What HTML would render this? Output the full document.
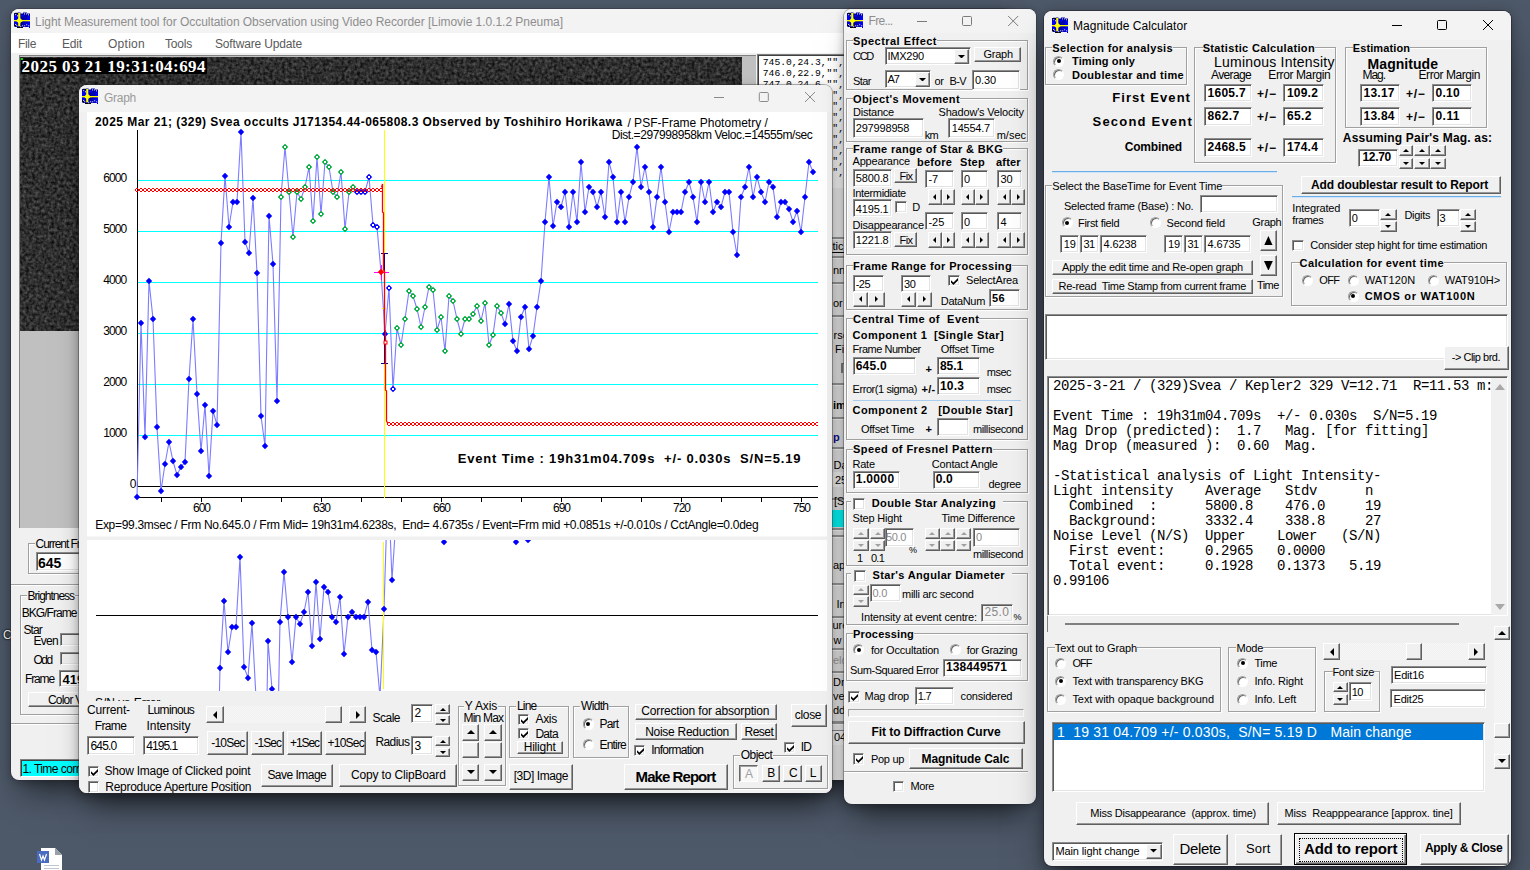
<!DOCTYPE html>
<html lang="en"><head><meta charset="utf-8"><title>Limovie - Magnitude Calculator</title>
<style>
html,body{margin:0;padding:0;}
body{width:1530px;height:870px;overflow:hidden;position:relative;background:#4d5868;font-family:"Liberation Sans",sans-serif;font-size:11px;color:#000;}
.win{position:absolute;overflow:hidden;border-radius:8px;box-shadow:0 0 0 1px rgba(40,40,50,0.35),0 2px 10px rgba(0,0,0,0.28),0 22px 28px -10px rgba(0,0,0,0.5);}
.win>div,.win>span,.win div>span.t{position:absolute;}
.win>div{box-sizing:border-box;}
.t{white-space:pre;position:absolute;}
.btn{background:#f0f0f0;border:1px solid;border-color:#fff #5f5f5f #5f5f5f #fff;box-shadow:inset -1px -1px #989898,inset 1px 1px #f0f0f0;}
.btnp{background:#f8f8f8;border:1px solid;border-color:#696969 #fff #fff #696969;box-shadow:inset 1px 1px #a0a0a0;}
.tb{background:#fff;border:1px solid;border-color:#8c8c8c #fff #fff #8c8c8c;box-shadow:inset 1px 1px #5a5a5a,inset -1px -1px #e3e3e3;}
.sunk{border:1px solid;border-color:#a0a0a0 #fff #fff #a0a0a0;}
.gb{border:1px solid #a0a0a0;box-shadow:1px 1px 0 #fff,inset 1px 1px 0 #fff;}
.chk{background:#fff;border:1px solid;border-color:#8c8c8c #fff #fff #8c8c8c;box-shadow:inset 1px 1px #5a5a5a,inset -1px -1px #e3e3e3;}
.rad{background:#fff;border-radius:50%;border:1px solid;border-color:#a0a0a0 #fff #fff #a0a0a0;box-shadow:inset 1px 1px 0.5px #696969;}
.rad i{position:absolute;left:50%;top:50%;width:4px;height:4px;margin:-2px 0 0 -2px;background:#000;border-radius:50%;}
.sbtrack{background:#f7f7f7;background-image:linear-gradient(45deg,#f0f0f0 25%,transparent 25%,transparent 75%,#f0f0f0 75%),linear-gradient(45deg,#f0f0f0 25%,transparent 25%,transparent 75%,#f0f0f0 75%);background-size:2px 2px;background-position:0 0,1px 1px;}
</style></head>
<body>
<svg width="26" height="24" viewBox="0 0 26 24" style="position:absolute;left:37px;top:848px"><path d="M4 0 H18 L25 7 V24 H4 Z" fill="#fff"/><path d="M18 0 L25 7 H18 Z" fill="#9aa0a8"/><rect x="0" y="3" width="12" height="12" fill="#4a6cc0"/><path d="M2.5 6 L4.5 12 L6 8 L7.5 12 L9.5 6" fill="none" stroke="#fff" stroke-width="1.2"/><rect x="7" y="17" width="15" height="1" fill="#c0c6d0"/><rect x="7" y="20" width="15" height="1" fill="#c0c6d0"/></svg>
<span class="t" style="left:3px;top:628px;font-size:12px;line-height:14px;color:#fff;text-shadow:0 0 2px #000,0 0 2px #000;">C</span>
<div class="win" style="left:11px;top:9px;width:1000px;height:771px;background:#f0f0f0;"><div style="left:0.0px;top:0.0px;width:1000.0px;height:24.0px;background:#f3f3f3;"></div>
<svg width="16" height="16" viewBox="0 0 16 16" style="position:absolute;left:3px;top:3.3000000000000007px"><path d="M0 1 H4 V0.5 H6.5 V1.5 H9 V0.5 H13 V1.5 H16 V16 H15 V15 H9 V16 H3 V15 H1 V14 H0 Z" fill="#0000a8"/><rect x="0" y="4" width="3.6" height="3.6" fill="#0000ff"/><rect x="13.5" y="4" width="2.5" height="11" fill="#0000ff"/><rect x="7" y="3" width="3" height="1.5" fill="#0000ff"/><rect x="0.5" y="9.6" width="3" height="2.4" fill="#0000f0"/><rect x="10.5" y="11" width="2.5" height="1.2" fill="#0000ff"/><rect x="1" y="0.8" width="3" height="1.2" fill="#000030"/><rect x="3" y="15" width="6" height="1" fill="#000"/><rect x="0" y="12.5" width="1.5" height="2" fill="#000"/><g fill="#f4f4ff"><rect x="1.2" y="2.2" width="1" height="1"/><rect x="3" y="3.3" width="1" height="1"/><rect x="10" y="1.4" width="1" height="1"/><rect x="12" y="1.4" width="1" height="1"/><rect x="14" y="2.3" width="1" height="1"/><rect x="1.2" y="12" width="1" height="1"/><rect x="2.3" y="13.2" width="1" height="1"/><rect x="6.2" y="14.2" width="1" height="1"/><rect x="8.2" y="13.3" width="1" height="1"/><rect x="10.2" y="13.3" width="1" height="1"/><rect x="12.2" y="12.3" width="1" height="1"/><rect x="14.2" y="13.3" width="1" height="1"/></g><rect x="0" y="8" width="16" height="1.3" fill="#ffff00"/><rect x="4.2" y="1" width="2.1" height="13.3" fill="#ffff00"/><polygon points="5.25,5.6 9,8.65 5.25,11.6 1.8,8.65" fill="#ffff00"/></svg>
<span class="t" style="left:24.0px;top:5.5px;font-size:12px;line-height:15px;color:#8e8e8e;letter-spacing:-0.042px;">Light Measurement tool for Occultation Observation using Video Recorder [Limovie 1.0.1.2 Pneuma]</span>
<div style="left:0.0px;top:24.0px;width:1000.0px;height:20.0px;background:#fff;"></div>
<span class="t" style="left:7.0px;top:28.0px;font-size:12px;line-height:15px;color:#5a5a5a;letter-spacing:-0.336px;">File</span>
<span class="t" style="left:51.0px;top:28.0px;font-size:12px;line-height:15px;color:#5a5a5a;letter-spacing:-0.172px;">Edit</span>
<span class="t" style="left:97.0px;top:28.0px;font-size:12px;line-height:15px;color:#5a5a5a;letter-spacing:0.273px;">Option</span>
<span class="t" style="left:154.0px;top:28.0px;font-size:12px;line-height:15px;color:#5a5a5a;letter-spacing:-0.203px;">Tools</span>
<span class="t" style="left:204.0px;top:28.0px;font-size:12px;line-height:15px;color:#5a5a5a;letter-spacing:-0.159px;">Software Update</span>
<div style="left:8.0px;top:46.0px;width:737.0px;height:473.0px;background:#c0c0c0;border-top:1px solid #808080;border-left:1px solid #808080;box-sizing:border-box;"></div>
<svg width="722" height="274" style="position:absolute;left:9px;top:48px"><defs><filter id="nz" x="0" y="0" width="100%" height="100%" color-interpolation-filters="sRGB"><feTurbulence type="fractalNoise" baseFrequency="0.32" numOctaves="2" seed="3"/><feColorMatrix type="matrix" values="0.42 0 0 0 -0.025  0.42 0 0 0 -0.025  0.42 0 0 0 -0.025  0 0 0 0 1"/></filter></defs><rect width="722" height="274" fill="#222"/><rect width="722" height="274" filter="url(#nz)"/></svg>
<div style="left:10.0px;top:49.0px;width:186.0px;height:16.3px;background:#000;"></div>
<span class="t" style="left:10.6px;top:48.8px;font-size:17px;line-height:18px;font-weight:bold;color:#fff;font-family:'Liberation Serif', serif;letter-spacing:0.442px;">2025 03 21 19:31:04:694</span>
<div style="left:10.0px;top:49.0px;width:2.0px;height:2.0px;background:#00e000;"></div>
<div style="left:731.0px;top:48.0px;width:13.0px;height:283.0px;background:#c0c0c0;"></div>
<div style="left:746.0px;top:45.0px;width:254.0px;height:134.0px;background:#fff;border-top:1px solid #808080;border-left:1px solid #808080;box-shadow:inset 1px 1px #404040;box-sizing:border-box;"></div>
<span class="t" style="left:751.8px;top:47.5px;font-size:9.67px;line-height:11px;font-family:'Liberation Mono', monospace;">745.0,24.3,&quot;&quot;,</span>
<span class="t" style="left:751.8px;top:58.5px;font-size:9.67px;line-height:11px;font-family:'Liberation Mono', monospace;">746.0,22.9,&quot;&quot;,</span>
<span class="t" style="left:751.8px;top:69.5px;font-size:9.67px;line-height:11px;font-family:'Liberation Mono', monospace;">747.0,24.6,&quot;&quot;,</span>
<span class="t" style="left:751.8px;top:80.5px;font-size:9.67px;line-height:11px;font-family:'Liberation Mono', monospace;">748.0,23.8,&quot;&quot;,</span>
<span class="t" style="left:751.8px;top:91.5px;font-size:9.67px;line-height:11px;font-family:'Liberation Mono', monospace;">749.0,25.1,&quot;&quot;,</span>
<span class="t" style="left:751.8px;top:102.5px;font-size:9.67px;line-height:11px;font-family:'Liberation Mono', monospace;">750.0,22.4,&quot;&quot;,</span>
<span class="t" style="left:751.8px;top:113.5px;font-size:9.67px;line-height:11px;font-family:'Liberation Mono', monospace;">751.0,24.0,&quot;&quot;,</span>
<span class="t" style="left:751.8px;top:124.5px;font-size:9.67px;line-height:11px;font-family:'Liberation Mono', monospace;">752.0,23.3,&quot;&quot;,</span>
<span class="t" style="left:751.8px;top:135.5px;font-size:9.67px;line-height:11px;font-family:'Liberation Mono', monospace;">753.0,25.6,&quot;&quot;,</span>
<span class="t" style="left:751.8px;top:146.5px;font-size:9.67px;line-height:11px;font-family:'Liberation Mono', monospace;">754.0,24.9,&quot;&quot;,</span>
<span class="t" style="left:751.8px;top:157.5px;font-size:9.67px;line-height:11px;font-family:'Liberation Mono', monospace;">755.0,22.7,&quot;&quot;,</span>
<div style="left:821.0px;top:179.0px;width:14.0px;height:536.0px;background:#ececec;"></div>
<div style="left:821.0px;top:715.0px;width:14.0px;height:57.0px;background:#f4f4f4;"></div>
<div style="left:821.0px;top:179.0px;width:14.0px;height:49.0px;background:#f4f4f4;"></div>
<div style="left:821.0px;top:228.0px;width:14.0px;height:2.0px;background:#9c9c9c;"></div>
<div style="left:821.0px;top:230.0px;width:14.0px;height:1.0px;background:#fff;"></div>
<div style="left:821.0px;top:247.0px;width:14.0px;height:2.0px;background:#9c9c9c;"></div>
<div style="left:821.0px;top:249.0px;width:14.0px;height:1.0px;background:#fff;"></div>
<div style="left:821.0px;top:273.0px;width:14.0px;height:2.0px;background:#9c9c9c;"></div>
<div style="left:821.0px;top:275.0px;width:14.0px;height:1.0px;background:#fff;"></div>
<div style="left:821.0px;top:306.0px;width:14.0px;height:2.0px;background:#9c9c9c;"></div>
<div style="left:821.0px;top:308.0px;width:14.0px;height:1.0px;background:#fff;"></div>
<div style="left:821.0px;top:374.0px;width:14.0px;height:2.0px;background:#9c9c9c;"></div>
<div style="left:821.0px;top:376.0px;width:14.0px;height:1.0px;background:#fff;"></div>
<div style="left:821.0px;top:408.0px;width:14.0px;height:2.0px;background:#9c9c9c;"></div>
<div style="left:821.0px;top:410.0px;width:14.0px;height:1.0px;background:#fff;"></div>
<div style="left:821.0px;top:438.0px;width:14.0px;height:2.0px;background:#9c9c9c;"></div>
<div style="left:821.0px;top:440.0px;width:14.0px;height:1.0px;background:#fff;"></div>
<div style="left:821.0px;top:489.0px;width:14.0px;height:2.0px;background:#9c9c9c;"></div>
<div style="left:821.0px;top:491.0px;width:14.0px;height:1.0px;background:#fff;"></div>
<div style="left:821.0px;top:519.0px;width:14.0px;height:2.0px;background:#9c9c9c;"></div>
<div style="left:821.0px;top:521.0px;width:14.0px;height:1.0px;background:#fff;"></div>
<div style="left:821.0px;top:526.0px;width:14.0px;height:2.0px;background:#9c9c9c;"></div>
<div style="left:821.0px;top:528.0px;width:14.0px;height:1.0px;background:#fff;"></div>
<div style="left:821.0px;top:574.0px;width:14.0px;height:2.0px;background:#9c9c9c;"></div>
<div style="left:821.0px;top:576.0px;width:14.0px;height:1.0px;background:#fff;"></div>
<div style="left:821.0px;top:607.0px;width:14.0px;height:2.0px;background:#9c9c9c;"></div>
<div style="left:821.0px;top:609.0px;width:14.0px;height:1.0px;background:#fff;"></div>
<div style="left:821.0px;top:639.0px;width:14.0px;height:2.0px;background:#9c9c9c;"></div>
<div style="left:821.0px;top:641.0px;width:14.0px;height:1.0px;background:#fff;"></div>
<div style="left:821.0px;top:662.0px;width:14.0px;height:2.0px;background:#9c9c9c;"></div>
<div style="left:821.0px;top:664.0px;width:14.0px;height:1.0px;background:#fff;"></div>
<div style="left:821.0px;top:712.0px;width:14.0px;height:2.0px;background:#9c9c9c;"></div>
<div style="left:821.0px;top:714.0px;width:14.0px;height:1.0px;background:#fff;"></div>
<div style="left:821.0px;top:463.4px;width:14.0px;height:14.6px;background:#fafafa;"></div>
<div style="left:821.0px;top:500.6px;width:14.0px;height:17.4px;background:#00ffff;"></div>
<div style="left:821.0px;top:720.6px;width:14.0px;height:15.9px;background:#fcfcfc;border-top:1px solid #909090;box-sizing:border-box;"></div>
<div style="left:829.5px;top:354.0px;width:5.5px;height:10.0px;background:#e0e0e0;border-left:2px solid #808080;border-top:1px solid #808080;box-sizing:border-box;"></div>
<span class="t" style="left:821.5px;top:230.0px;font-size:11px;line-height:14px;color:#000;">tic</span>
<span class="t" style="left:822.0px;top:254.0px;font-size:11px;line-height:14px;color:#000;">nn</span>
<span class="t" style="left:822.0px;top:287.0px;font-size:11px;line-height:14px;color:#000;">or</span>
<span class="t" style="left:822.5px;top:318.7px;font-size:11px;line-height:14px;color:#000;">rse</span>
<span class="t" style="left:824.0px;top:333.0px;font-size:11px;line-height:14px;color:#000;">Fi</span>
<span class="t" style="left:822.0px;top:388.8px;font-size:11px;line-height:14px;font-weight:bold;color:#000;">im</span>
<span class="t" style="left:822.0px;top:421.0px;font-size:11px;line-height:14px;font-weight:bold;color:#101090;">p</span>
<span class="t" style="left:822.5px;top:448.8px;font-size:11px;line-height:14px;color:#000;">Da</span>
<span class="t" style="left:824.0px;top:464.0px;font-size:11px;line-height:14px;color:#000;">25</span>
<span class="t" style="left:823.0px;top:484.7px;font-size:11px;line-height:14px;color:#000;">[S</span>
<span class="t" style="left:822.0px;top:548.5px;font-size:11px;line-height:14px;color:#000;">ap</span>
<span class="t" style="left:825.5px;top:588.0px;font-size:11px;line-height:14px;color:#000;">In</span>
<span class="t" style="left:821.5px;top:608.5px;font-size:11px;line-height:14px;color:#000;">ure</span>
<span class="t" style="left:822.5px;top:623.5px;font-size:11px;line-height:14px;color:#000;">w</span>
<span class="t" style="left:822.0px;top:643.7px;font-size:11px;line-height:14px;color:#a0a0a0;">eld</span>
<span class="t" style="left:822.0px;top:666.0px;font-size:11px;line-height:14px;color:#000;">Dro</span>
<span class="t" style="left:822.0px;top:680.0px;font-size:11px;line-height:14px;color:#000;">ver</span>
<span class="t" style="left:822.0px;top:693.6px;font-size:11px;line-height:14px;color:#000;">dd</span>
<span class="t" style="left:823.0px;top:721.0px;font-size:11px;line-height:14px;color:#000;">04</span>
<div style="left:821.0px;top:242.5px;width:14.0px;height:1.0px;background:#000;"></div>
<div class="gb" style="left:16.5px;top:534.0px;width:272.5px;height:31.0px;"></div>
<span class="t" style="left:23.5px;top:527.5px;font-size:12px;line-height:15px;letter-spacing:-1.041px;background:#f0f0f0;padding:0 1px;">Current Frame</span>
<div class="tb" style="left:24.5px;top:542.5px;width:164.5px;height:19.5px;"></div>
<span class="t" style="left:27.0px;top:544.5px;font-size:14px;line-height:18px;font-weight:bold;letter-spacing:0.014px;">645</span>
<div style="left:0.0px;top:575.0px;width:1000.0px;height:2.0px;border-top:1px solid #a0a0a0;border-bottom:1px solid #fff;box-sizing:border-box;"></div>
<div class="gb" style="left:8.5px;top:586.0px;width:280.5px;height:120.0px;"></div>
<span class="t" style="left:15.6px;top:579.5px;font-size:12px;line-height:15px;letter-spacing:-1.030px;background:#f0f0f0;padding:0 1px;">Brightness</span>
<span class="t" style="left:10.7px;top:597.2px;font-size:12px;line-height:15px;letter-spacing:-0.951px;">BKG/Frame</span>
<span class="t" style="left:12.4px;top:613.5px;font-size:12px;line-height:15px;letter-spacing:-0.854px;">Star</span>
<span class="t" style="left:22.4px;top:625.2px;font-size:12px;line-height:15px;letter-spacing:-0.690px;">Even</span>
<div class="tb" style="left:49.0px;top:623.7px;width:140.0px;height:13.8px;background:#f0f0f0;"></div>
<span class="t" style="left:22.4px;top:644.1px;font-size:12px;line-height:15px;letter-spacing:-1.462px;">Odd</span>
<div class="tb" style="left:49.0px;top:642.7px;width:140.0px;height:13.8px;background:#f0f0f0;"></div>
<span class="t" style="left:14.0px;top:662.5px;font-size:12px;line-height:15px;letter-spacing:-1.134px;">Frame</span>
<div class="tb" style="left:48.3px;top:660.6px;width:140.7px;height:17.4px;"></div>
<span class="t" style="left:51.5px;top:662.5px;font-size:13px;line-height:16px;font-weight:bold;">4195.1</span>
<div class="btn" style="left:16.6px;top:683.0px;width:172.4px;height:15.0px;"></div>
<span class="t" style="left:37.0px;top:684.0px;font-size:12px;line-height:15px;letter-spacing:-0.809px;">Color Vi</span>
<div style="left:0.0px;top:714.0px;width:1000.0px;height:2.0px;border-top:1px solid #a0a0a0;border-bottom:1px solid #fff;box-sizing:border-box;"></div>
<div style="left:8.5px;top:749.5px;width:280.5px;height:18.5px;background:#00ffff;border:1px solid;border-color:#808080 #fff #fff #808080;box-shadow:inset 1px 1px #404040;box-sizing:border-box;"></div>
<span class="t" style="left:11.4px;top:752.5px;font-size:12px;line-height:15px;letter-spacing:-0.543px;">1. Time correction</span></div>
<div class="win" style="left:79px;top:85px;width:753px;height:708px;background:#f0f0f0;"><div style="left:0.0px;top:0.0px;width:753.0px;height:27.0px;background:#f3f3f3;"></div>
<svg width="16" height="16" viewBox="0 0 16 16" style="position:absolute;left:3px;top:3.299999999999997px"><path d="M0 1 H4 V0.5 H6.5 V1.5 H9 V0.5 H13 V1.5 H16 V16 H15 V15 H9 V16 H3 V15 H1 V14 H0 Z" fill="#0000a8"/><rect x="0" y="4" width="3.6" height="3.6" fill="#0000ff"/><rect x="13.5" y="4" width="2.5" height="11" fill="#0000ff"/><rect x="7" y="3" width="3" height="1.5" fill="#0000ff"/><rect x="0.5" y="9.6" width="3" height="2.4" fill="#0000f0"/><rect x="10.5" y="11" width="2.5" height="1.2" fill="#0000ff"/><rect x="1" y="0.8" width="3" height="1.2" fill="#000030"/><rect x="3" y="15" width="6" height="1" fill="#000"/><rect x="0" y="12.5" width="1.5" height="2" fill="#000"/><g fill="#f4f4ff"><rect x="1.2" y="2.2" width="1" height="1"/><rect x="3" y="3.3" width="1" height="1"/><rect x="10" y="1.4" width="1" height="1"/><rect x="12" y="1.4" width="1" height="1"/><rect x="14" y="2.3" width="1" height="1"/><rect x="1.2" y="12" width="1" height="1"/><rect x="2.3" y="13.2" width="1" height="1"/><rect x="6.2" y="14.2" width="1" height="1"/><rect x="8.2" y="13.3" width="1" height="1"/><rect x="10.2" y="13.3" width="1" height="1"/><rect x="12.2" y="12.3" width="1" height="1"/><rect x="14.2" y="13.3" width="1" height="1"/></g><rect x="0" y="8" width="16" height="1.3" fill="#ffff00"/><rect x="4.2" y="1" width="2.1" height="13.3" fill="#ffff00"/><polygon points="5.25,5.6 9,8.65 5.25,11.6 1.8,8.65" fill="#ffff00"/></svg>
<span class="t" style="left:25.0px;top:5.5px;font-size:12px;line-height:15px;color:#9a9a9a;letter-spacing:-0.272px;">Graph</span>
<svg width="753" height="40" style="position:absolute;left:0;top:0" fill="none" stroke="#8a8a8a" stroke-width="1"><line x1="635" y1="12.5" x2="645" y2="12.5"/><rect x="680.3" y="7.5" width="9" height="9" rx="1"/><path d="M726 7 L736 17 M736 7 L726 17"/></svg>
<svg width="740" height="579" viewBox="87 112 740 579" style="position:absolute;left:8px;top:27px">
<rect x="87" y="112" width="740" height="579" fill="#fff"/>
<rect x="87" y="536.5" width="740" height="3.5" fill="#f0f0f0"/>
<g shape-rendering="crispEdges">
<rect x="138" y="180" width="680" height="1" fill="#00ffff"/>
<rect x="138" y="231" width="680" height="1" fill="#00ffff"/>
<rect x="138" y="282" width="680" height="1" fill="#00ffff"/>
<rect x="138" y="333" width="680" height="1" fill="#00ffff"/>
<rect x="138" y="384" width="680" height="1" fill="#00ffff"/>
<rect x="138" y="435" width="680" height="1" fill="#00ffff"/>
<rect x="137" y="130" width="1.4" height="357" fill="#000"/>
<rect x="137" y="486" width="681" height="1" fill="#000"/>
<rect x="137" y="497" width="681" height="1" fill="#000"/>
<rect x="161" y="497" width="1" height="5" fill="#000"/>
<rect x="201" y="497" width="1" height="5" fill="#000"/>
<rect x="241" y="497" width="1" height="5" fill="#000"/>
<rect x="281" y="497" width="1" height="5" fill="#000"/>
<rect x="321" y="497" width="1" height="5" fill="#000"/>
<rect x="361" y="497" width="1" height="5" fill="#000"/>
<rect x="401" y="497" width="1" height="5" fill="#000"/>
<rect x="441" y="497" width="1" height="5" fill="#000"/>
<rect x="481" y="497" width="1" height="5" fill="#000"/>
<rect x="521" y="497" width="1" height="5" fill="#000"/>
<rect x="561" y="497" width="1" height="5" fill="#000"/>
<rect x="601" y="497" width="1" height="5" fill="#000"/>
<rect x="641" y="497" width="1" height="5" fill="#000"/>
<rect x="681" y="497" width="1" height="5" fill="#000"/>
<rect x="721" y="497" width="1" height="5" fill="#000"/>
<rect x="761" y="497" width="1" height="5" fill="#000"/>
<rect x="801" y="497" width="1" height="5" fill="#000"/>
</g>
<polyline points="137,497 141,323 145,437 149,281 153,319 157,427 161,491 165,464 169,442 173,461 177,475 181,467 185,462 189,379 193,319 197,394 201,451 205,405 209,476 213,411 217,425 221,243 225,176 229,227 233,202 237,202 241,132 245,242 249,253 253,198 257,273 261,416 265,446 269,216 273,264 277,401 281,197 285,147 289,192 293,237 297,192 301,199 305,187 309,167 313,221 317,157 321,214 325,162 329,167 333,192 337,197 341,172 345,229 349,192 353,187 357,192 361,192 365,192 369,177 373,225 377,227 381,272 385,334 389,288 393,389 397,328 401,345 405,319 409,291 413,296 417,309 421,327 425,307 429,287 433,290 437,330 441,317 445,351 449,296 453,301 457,319 461,334 465,319 469,319 473,314 477,306 481,321 485,303 489,345 493,335 497,306 501,313 505,324 509,304 513,341 517,351 521,317 525,307 529,349 533,336 537,307 541,281 545,222 549,177 553,226 557,202 561,207 565,192 569,227 573,192 577,222 581,162 585,212 589,187 593,192 597,207 601,192 605,217 609,162 613,177 617,222 621,192 625,222 629,197 633,182 637,147 641,187 645,167 649,192 653,227 657,197 661,167 665,202 669,232 673,212 677,212 681,212 685,192 689,182 693,197 697,222 701,182 705,202 709,182 713,212 717,202 721,207 725,192 729,192 733,232 737,255 741,197 745,187 749,167 753,197 757,177 761,192 765,202 769,182 773,187 777,217 781,202 785,202 789,209 793,222 797,211 801,232 805,197 809,162 813,172" fill="none" stroke="#7c7cff" stroke-width="1.1"/>
<rect x="384" y="130" width="1" height="368" fill="#ffff00" shape-rendering="crispEdges"/>
<g shape-rendering="crispEdges"><rect x="384" y="254" width="1" height="110" fill="#000080"/><rect x="381" y="253" width="7" height="1" fill="#000080"/><rect x="381" y="363" width="7" height="1" fill="#000080"/><rect x="374" y="272" width="15" height="1" fill="#ff00ff"/><rect x="381" y="265" width="1" height="15" fill="#ff00ff"/><rect x="382" y="308" width="4" height="1" fill="#ffe000"/></g>
<polygon points="133.8,497 137,493.8 140.2,497 137,500.2" fill="#0000ff"/>
<polygon points="137.8,323 141,319.8 144.2,323 141,326.2" fill="#0000ff"/>
<polygon points="141.8,437 145,433.8 148.2,437 145,440.2" fill="#0000ff"/>
<polygon points="145.8,281 149,277.8 152.2,281 149,284.2" fill="#0000ff"/>
<polygon points="149.8,319 153,315.8 156.2,319 153,322.2" fill="#0000ff"/>
<polygon points="153.8,427 157,423.8 160.2,427 157,430.2" fill="#0000ff"/>
<polygon points="157.8,491 161,487.8 164.2,491 161,494.2" fill="#0000ff"/>
<polygon points="161.8,464 165,460.8 168.2,464 165,467.2" fill="#0000ff"/>
<polygon points="165.8,442 169,438.8 172.2,442 169,445.2" fill="#0000ff"/>
<polygon points="169.8,461 173,457.8 176.2,461 173,464.2" fill="#0000ff"/>
<polygon points="173.8,475 177,471.8 180.2,475 177,478.2" fill="#0000ff"/>
<polygon points="177.8,467 181,463.8 184.2,467 181,470.2" fill="#0000ff"/>
<polygon points="181.8,462 185,458.8 188.2,462 185,465.2" fill="#0000ff"/>
<polygon points="185.8,379 189,375.8 192.2,379 189,382.2" fill="#0000ff"/>
<polygon points="189.8,319 193,315.8 196.2,319 193,322.2" fill="#0000ff"/>
<polygon points="193.8,394 197,390.8 200.2,394 197,397.2" fill="#0000ff"/>
<polygon points="197.8,451 201,447.8 204.2,451 201,454.2" fill="#0000ff"/>
<polygon points="201.8,405 205,401.8 208.2,405 205,408.2" fill="#0000ff"/>
<polygon points="205.8,476 209,472.8 212.2,476 209,479.2" fill="#0000ff"/>
<polygon points="209.8,411 213,407.8 216.2,411 213,414.2" fill="#0000ff"/>
<polygon points="213.8,425 217,421.8 220.2,425 217,428.2" fill="#0000ff"/>
<polygon points="217.8,243 221,239.8 224.2,243 221,246.2" fill="#0000ff"/>
<polygon points="221.8,176 225,172.8 228.2,176 225,179.2" fill="#0000ff"/>
<polygon points="225.8,227 229,223.8 232.2,227 229,230.2" fill="#0000ff"/>
<polygon points="229.8,202 233,198.8 236.2,202 233,205.2" fill="#0000ff"/>
<polygon points="233.8,202 237,198.8 240.2,202 237,205.2" fill="#0000ff"/>
<polygon points="237.8,132 241,128.8 244.2,132 241,135.2" fill="#0000ff"/>
<polygon points="241.8,242 245,238.8 248.2,242 245,245.2" fill="#0000ff"/>
<polygon points="245.8,253 249,249.8 252.2,253 249,256.2" fill="#0000ff"/>
<polygon points="249.8,198 253,194.8 256.2,198 253,201.2" fill="#0000ff"/>
<polygon points="253.8,273 257,269.8 260.2,273 257,276.2" fill="#0000ff"/>
<polygon points="257.8,416 261,412.8 264.2,416 261,419.2" fill="#0000ff"/>
<polygon points="261.8,446 265,442.8 268.2,446 265,449.2" fill="#0000ff"/>
<polygon points="265.8,216 269,212.8 272.2,216 269,219.2" fill="#0000ff"/>
<polygon points="269.8,264 273,260.8 276.2,264 273,267.2" fill="#0000ff"/>
<polygon points="273.8,401 277,397.8 280.2,401 277,404.2" fill="#0000ff"/>
<polygon points="277.8,197 281,193.8 284.2,197 281,200.2" fill="#00aa3c"/><rect x="280" y="196" width="2" height="2" fill="#fff"/>
<polygon points="281.8,147 285,143.8 288.2,147 285,150.2" fill="#00aa3c"/><rect x="284" y="146" width="2" height="2" fill="#fff"/>
<polygon points="285.8,192 289,188.8 292.2,192 289,195.2" fill="#00aa3c"/><rect x="288" y="191" width="2" height="2" fill="#fff"/>
<polygon points="289.8,237 293,233.8 296.2,237 293,240.2" fill="#00aa3c"/><rect x="292" y="236" width="2" height="2" fill="#fff"/>
<polygon points="293.8,192 297,188.8 300.2,192 297,195.2" fill="#00aa3c"/><rect x="296" y="191" width="2" height="2" fill="#fff"/>
<polygon points="297.8,199 301,195.8 304.2,199 301,202.2" fill="#00aa3c"/><rect x="300" y="198" width="2" height="2" fill="#fff"/>
<polygon points="301.8,187 305,183.8 308.2,187 305,190.2" fill="#00aa3c"/><rect x="304" y="186" width="2" height="2" fill="#fff"/>
<polygon points="305.8,167 309,163.8 312.2,167 309,170.2" fill="#00aa3c"/><rect x="308" y="166" width="2" height="2" fill="#fff"/>
<polygon points="309.8,221 313,217.8 316.2,221 313,224.2" fill="#00aa3c"/><rect x="312" y="220" width="2" height="2" fill="#fff"/>
<polygon points="313.8,157 317,153.8 320.2,157 317,160.2" fill="#00aa3c"/><rect x="316" y="156" width="2" height="2" fill="#fff"/>
<polygon points="317.8,214 321,210.8 324.2,214 321,217.2" fill="#00aa3c"/><rect x="320" y="213" width="2" height="2" fill="#fff"/>
<polygon points="321.8,162 325,158.8 328.2,162 325,165.2" fill="#00aa3c"/><rect x="324" y="161" width="2" height="2" fill="#fff"/>
<polygon points="325.8,167 329,163.8 332.2,167 329,170.2" fill="#00aa3c"/><rect x="328" y="166" width="2" height="2" fill="#fff"/>
<polygon points="329.8,192 333,188.8 336.2,192 333,195.2" fill="#00aa3c"/><rect x="332" y="191" width="2" height="2" fill="#fff"/>
<polygon points="333.8,197 337,193.8 340.2,197 337,200.2" fill="#00aa3c"/><rect x="336" y="196" width="2" height="2" fill="#fff"/>
<polygon points="337.8,172 341,168.8 344.2,172 341,175.2" fill="#00aa3c"/><rect x="340" y="171" width="2" height="2" fill="#fff"/>
<polygon points="341.8,229 345,225.8 348.2,229 345,232.2" fill="#00aa3c"/><rect x="344" y="228" width="2" height="2" fill="#fff"/>
<polygon points="345.8,192 349,188.8 352.2,192 349,195.2" fill="#00aa3c"/><rect x="348" y="191" width="2" height="2" fill="#fff"/>
<polygon points="349.8,187 353,183.8 356.2,187 353,190.2" fill="#00aa3c"/><rect x="352" y="186" width="2" height="2" fill="#fff"/>
<polygon points="353.8,192 357,188.8 360.2,192 357,195.2" fill="#0000ff"/><rect x="356" y="191" width="2" height="2" fill="#fff"/>
<polygon points="357.8,192 361,188.8 364.2,192 361,195.2" fill="#0000ff"/><rect x="360" y="191" width="2" height="2" fill="#fff"/>
<polygon points="361.8,192 365,188.8 368.2,192 365,195.2" fill="#0000ff"/><rect x="364" y="191" width="2" height="2" fill="#fff"/>
<polygon points="365.8,177 369,173.8 372.2,177 369,180.2" fill="#0000ff"/><rect x="368" y="176" width="2" height="2" fill="#fff"/>
<polygon points="369.8,225 373,221.8 376.2,225 373,228.2" fill="#0000ff"/><rect x="372" y="224" width="2" height="2" fill="#fff"/>
<polygon points="373.8,227 377,223.8 380.2,227 377,230.2" fill="#0000ff"/><rect x="376" y="226" width="2" height="2" fill="#fff"/>
<polygon points="377.8,272 381,268.8 384.2,272 381,275.2" fill="#ff0000"/>
<polygon points="381.8,334 385,330.8 388.2,334 385,337.2" fill="#0000ff"/>
<polygon points="385.8,288 389,284.8 392.2,288 389,291.2" fill="#0000ff"/><rect x="388" y="287" width="2" height="2" fill="#fff"/>
<polygon points="389.8,389 393,385.8 396.2,389 393,392.2" fill="#0000ff"/><rect x="392" y="388" width="2" height="2" fill="#fff"/>
<polygon points="393.8,328 397,324.8 400.2,328 397,331.2" fill="#00aa3c"/><rect x="396" y="327" width="2" height="2" fill="#fff"/>
<polygon points="397.8,345 401,341.8 404.2,345 401,348.2" fill="#00aa3c"/><rect x="400" y="344" width="2" height="2" fill="#fff"/>
<polygon points="401.8,319 405,315.8 408.2,319 405,322.2" fill="#00aa3c"/><rect x="404" y="318" width="2" height="2" fill="#fff"/>
<polygon points="405.8,291 409,287.8 412.2,291 409,294.2" fill="#00aa3c"/><rect x="408" y="290" width="2" height="2" fill="#fff"/>
<polygon points="409.8,296 413,292.8 416.2,296 413,299.2" fill="#00aa3c"/><rect x="412" y="295" width="2" height="2" fill="#fff"/>
<polygon points="413.8,309 417,305.8 420.2,309 417,312.2" fill="#00aa3c"/><rect x="416" y="308" width="2" height="2" fill="#fff"/>
<polygon points="417.8,327 421,323.8 424.2,327 421,330.2" fill="#00aa3c"/><rect x="420" y="326" width="2" height="2" fill="#fff"/>
<polygon points="421.8,307 425,303.8 428.2,307 425,310.2" fill="#00aa3c"/><rect x="424" y="306" width="2" height="2" fill="#fff"/>
<polygon points="425.8,287 429,283.8 432.2,287 429,290.2" fill="#00aa3c"/><rect x="428" y="286" width="2" height="2" fill="#fff"/>
<polygon points="429.8,290 433,286.8 436.2,290 433,293.2" fill="#00aa3c"/><rect x="432" y="289" width="2" height="2" fill="#fff"/>
<polygon points="433.8,330 437,326.8 440.2,330 437,333.2" fill="#00aa3c"/><rect x="436" y="329" width="2" height="2" fill="#fff"/>
<polygon points="437.8,317 441,313.8 444.2,317 441,320.2" fill="#00aa3c"/><rect x="440" y="316" width="2" height="2" fill="#fff"/>
<polygon points="441.8,351 445,347.8 448.2,351 445,354.2" fill="#00aa3c"/><rect x="444" y="350" width="2" height="2" fill="#fff"/>
<polygon points="445.8,296 449,292.8 452.2,296 449,299.2" fill="#00aa3c"/><rect x="448" y="295" width="2" height="2" fill="#fff"/>
<polygon points="449.8,301 453,297.8 456.2,301 453,304.2" fill="#00aa3c"/><rect x="452" y="300" width="2" height="2" fill="#fff"/>
<polygon points="453.8,319 457,315.8 460.2,319 457,322.2" fill="#00aa3c"/><rect x="456" y="318" width="2" height="2" fill="#fff"/>
<polygon points="457.8,334 461,330.8 464.2,334 461,337.2" fill="#00aa3c"/><rect x="460" y="333" width="2" height="2" fill="#fff"/>
<polygon points="461.8,319 465,315.8 468.2,319 465,322.2" fill="#00aa3c"/><rect x="464" y="318" width="2" height="2" fill="#fff"/>
<polygon points="465.8,319 469,315.8 472.2,319 469,322.2" fill="#00aa3c"/><rect x="468" y="318" width="2" height="2" fill="#fff"/>
<polygon points="469.8,314 473,310.8 476.2,314 473,317.2" fill="#00aa3c"/><rect x="472" y="313" width="2" height="2" fill="#fff"/>
<polygon points="473.8,306 477,302.8 480.2,306 477,309.2" fill="#00aa3c"/><rect x="476" y="305" width="2" height="2" fill="#fff"/>
<polygon points="477.8,321 481,317.8 484.2,321 481,324.2" fill="#00aa3c"/><rect x="480" y="320" width="2" height="2" fill="#fff"/>
<polygon points="481.8,303 485,299.8 488.2,303 485,306.2" fill="#00aa3c"/><rect x="484" y="302" width="2" height="2" fill="#fff"/>
<polygon points="485.8,345 489,341.8 492.2,345 489,348.2" fill="#00aa3c"/><rect x="488" y="344" width="2" height="2" fill="#fff"/>
<polygon points="489.8,335 493,331.8 496.2,335 493,338.2" fill="#00aa3c"/><rect x="492" y="334" width="2" height="2" fill="#fff"/>
<polygon points="493.8,306 497,302.8 500.2,306 497,309.2" fill="#00aa3c"/><rect x="496" y="305" width="2" height="2" fill="#fff"/>
<polygon points="497.8,313 501,309.8 504.2,313 501,316.2" fill="#00aa3c"/><rect x="500" y="312" width="2" height="2" fill="#fff"/>
<polygon points="501.8,324 505,320.8 508.2,324 505,327.2" fill="#0000ff"/>
<polygon points="505.8,304 509,300.8 512.2,304 509,307.2" fill="#0000ff"/>
<polygon points="509.8,341 513,337.8 516.2,341 513,344.2" fill="#0000ff"/>
<polygon points="513.8,351 517,347.8 520.2,351 517,354.2" fill="#0000ff"/>
<polygon points="517.8,317 521,313.8 524.2,317 521,320.2" fill="#0000ff"/>
<polygon points="521.8,307 525,303.8 528.2,307 525,310.2" fill="#0000ff"/>
<polygon points="525.8,349 529,345.8 532.2,349 529,352.2" fill="#0000ff"/>
<polygon points="529.8,336 533,332.8 536.2,336 533,339.2" fill="#0000ff"/>
<polygon points="533.8,307 537,303.8 540.2,307 537,310.2" fill="#0000ff"/>
<polygon points="537.8,281 541,277.8 544.2,281 541,284.2" fill="#0000ff"/>
<polygon points="541.8,222 545,218.8 548.2,222 545,225.2" fill="#0000ff"/>
<polygon points="545.8,177 549,173.8 552.2,177 549,180.2" fill="#0000ff"/>
<polygon points="549.8,226 553,222.8 556.2,226 553,229.2" fill="#0000ff"/>
<polygon points="553.8,202 557,198.8 560.2,202 557,205.2" fill="#0000ff"/>
<polygon points="557.8,207 561,203.8 564.2,207 561,210.2" fill="#0000ff"/>
<polygon points="561.8,192 565,188.8 568.2,192 565,195.2" fill="#0000ff"/>
<polygon points="565.8,227 569,223.8 572.2,227 569,230.2" fill="#0000ff"/>
<polygon points="569.8,192 573,188.8 576.2,192 573,195.2" fill="#0000ff"/>
<polygon points="573.8,222 577,218.8 580.2,222 577,225.2" fill="#0000ff"/>
<polygon points="577.8,162 581,158.8 584.2,162 581,165.2" fill="#0000ff"/>
<polygon points="581.8,212 585,208.8 588.2,212 585,215.2" fill="#0000ff"/>
<polygon points="585.8,187 589,183.8 592.2,187 589,190.2" fill="#0000ff"/>
<polygon points="589.8,192 593,188.8 596.2,192 593,195.2" fill="#0000ff"/>
<polygon points="593.8,207 597,203.8 600.2,207 597,210.2" fill="#0000ff"/>
<polygon points="597.8,192 601,188.8 604.2,192 601,195.2" fill="#0000ff"/>
<polygon points="601.8,217 605,213.8 608.2,217 605,220.2" fill="#0000ff"/>
<polygon points="605.8,162 609,158.8 612.2,162 609,165.2" fill="#0000ff"/>
<polygon points="609.8,177 613,173.8 616.2,177 613,180.2" fill="#0000ff"/>
<polygon points="613.8,222 617,218.8 620.2,222 617,225.2" fill="#0000ff"/>
<polygon points="617.8,192 621,188.8 624.2,192 621,195.2" fill="#0000ff"/>
<polygon points="621.8,222 625,218.8 628.2,222 625,225.2" fill="#0000ff"/>
<polygon points="625.8,197 629,193.8 632.2,197 629,200.2" fill="#0000ff"/>
<polygon points="629.8,182 633,178.8 636.2,182 633,185.2" fill="#0000ff"/>
<polygon points="633.8,147 637,143.8 640.2,147 637,150.2" fill="#0000ff"/>
<polygon points="637.8,187 641,183.8 644.2,187 641,190.2" fill="#0000ff"/>
<polygon points="641.8,167 645,163.8 648.2,167 645,170.2" fill="#0000ff"/>
<polygon points="645.8,192 649,188.8 652.2,192 649,195.2" fill="#0000ff"/>
<polygon points="649.8,227 653,223.8 656.2,227 653,230.2" fill="#0000ff"/>
<polygon points="653.8,197 657,193.8 660.2,197 657,200.2" fill="#0000ff"/>
<polygon points="657.8,167 661,163.8 664.2,167 661,170.2" fill="#0000ff"/>
<polygon points="661.8,202 665,198.8 668.2,202 665,205.2" fill="#0000ff"/>
<polygon points="665.8,232 669,228.8 672.2,232 669,235.2" fill="#0000ff"/>
<polygon points="669.8,212 673,208.8 676.2,212 673,215.2" fill="#0000ff"/>
<polygon points="673.8,212 677,208.8 680.2,212 677,215.2" fill="#0000ff"/>
<polygon points="677.8,212 681,208.8 684.2,212 681,215.2" fill="#0000ff"/>
<polygon points="681.8,192 685,188.8 688.2,192 685,195.2" fill="#0000ff"/>
<polygon points="685.8,182 689,178.8 692.2,182 689,185.2" fill="#0000ff"/>
<polygon points="689.8,197 693,193.8 696.2,197 693,200.2" fill="#0000ff"/>
<polygon points="693.8,222 697,218.8 700.2,222 697,225.2" fill="#0000ff"/>
<polygon points="697.8,182 701,178.8 704.2,182 701,185.2" fill="#0000ff"/>
<polygon points="701.8,202 705,198.8 708.2,202 705,205.2" fill="#0000ff"/>
<polygon points="705.8,182 709,178.8 712.2,182 709,185.2" fill="#0000ff"/>
<polygon points="709.8,212 713,208.8 716.2,212 713,215.2" fill="#0000ff"/>
<polygon points="713.8,202 717,198.8 720.2,202 717,205.2" fill="#0000ff"/>
<polygon points="717.8,207 721,203.8 724.2,207 721,210.2" fill="#0000ff"/>
<polygon points="721.8,192 725,188.8 728.2,192 725,195.2" fill="#0000ff"/>
<polygon points="725.8,192 729,188.8 732.2,192 729,195.2" fill="#0000ff"/>
<polygon points="729.8,232 733,228.8 736.2,232 733,235.2" fill="#0000ff"/>
<polygon points="733.8,255 737,251.8 740.2,255 737,258.2" fill="#0000ff"/>
<polygon points="737.8,197 741,193.8 744.2,197 741,200.2" fill="#0000ff"/>
<polygon points="741.8,187 745,183.8 748.2,187 745,190.2" fill="#0000ff"/>
<polygon points="745.8,167 749,163.8 752.2,167 749,170.2" fill="#0000ff"/>
<polygon points="749.8,197 753,193.8 756.2,197 753,200.2" fill="#0000ff"/>
<polygon points="753.8,177 757,173.8 760.2,177 757,180.2" fill="#0000ff"/>
<polygon points="757.8,192 761,188.8 764.2,192 761,195.2" fill="#0000ff"/>
<polygon points="761.8,202 765,198.8 768.2,202 765,205.2" fill="#0000ff"/>
<polygon points="765.8,182 769,178.8 772.2,182 769,185.2" fill="#0000ff"/>
<polygon points="769.8,187 773,183.8 776.2,187 773,190.2" fill="#0000ff"/>
<polygon points="773.8,217 777,213.8 780.2,217 777,220.2" fill="#0000ff"/>
<polygon points="777.8,202 781,198.8 784.2,202 781,205.2" fill="#0000ff"/>
<polygon points="781.8,202 785,198.8 788.2,202 785,205.2" fill="#0000ff"/>
<polygon points="785.8,209 789,205.8 792.2,209 789,212.2" fill="#0000ff"/>
<polygon points="789.8,222 793,218.8 796.2,222 793,225.2" fill="#0000ff"/>
<polygon points="793.8,211 797,207.8 800.2,211 797,214.2" fill="#0000ff"/>
<polygon points="797.8,232 801,228.8 804.2,232 801,235.2" fill="#0000ff"/>
<polygon points="801.8,197 805,193.8 808.2,197 805,200.2" fill="#0000ff"/>
<polygon points="805.8,162 809,158.8 812.2,162 809,165.2" fill="#0000ff"/>
<polygon points="809.8,172 813,168.8 816.2,172 813,175.2" fill="#0000ff"/>
<clipPath id="uc"><rect x="130" y="120" width="688" height="380"/></clipPath>
<path d="M136 188h2v1h-2z M135 189h1v2h-1z M138 189h1v2h-1z M136 191h2v1h-2z M140 188h2v1h-2z M139 189h1v2h-1z M142 189h1v2h-1z M140 191h2v1h-2z M144 188h2v1h-2z M143 189h1v2h-1z M146 189h1v2h-1z M144 191h2v1h-2z M148 188h2v1h-2z M147 189h1v2h-1z M150 189h1v2h-1z M148 191h2v1h-2z M152 188h2v1h-2z M151 189h1v2h-1z M154 189h1v2h-1z M152 191h2v1h-2z M156 188h2v1h-2z M155 189h1v2h-1z M158 189h1v2h-1z M156 191h2v1h-2z M160 188h2v1h-2z M159 189h1v2h-1z M162 189h1v2h-1z M160 191h2v1h-2z M164 188h2v1h-2z M163 189h1v2h-1z M166 189h1v2h-1z M164 191h2v1h-2z M168 188h2v1h-2z M167 189h1v2h-1z M170 189h1v2h-1z M168 191h2v1h-2z M172 188h2v1h-2z M171 189h1v2h-1z M174 189h1v2h-1z M172 191h2v1h-2z M176 188h2v1h-2z M175 189h1v2h-1z M178 189h1v2h-1z M176 191h2v1h-2z M180 188h2v1h-2z M179 189h1v2h-1z M182 189h1v2h-1z M180 191h2v1h-2z M184 188h2v1h-2z M183 189h1v2h-1z M186 189h1v2h-1z M184 191h2v1h-2z M188 188h2v1h-2z M187 189h1v2h-1z M190 189h1v2h-1z M188 191h2v1h-2z M192 188h2v1h-2z M191 189h1v2h-1z M194 189h1v2h-1z M192 191h2v1h-2z M196 188h2v1h-2z M195 189h1v2h-1z M198 189h1v2h-1z M196 191h2v1h-2z M200 188h2v1h-2z M199 189h1v2h-1z M202 189h1v2h-1z M200 191h2v1h-2z M204 188h2v1h-2z M203 189h1v2h-1z M206 189h1v2h-1z M204 191h2v1h-2z M208 188h2v1h-2z M207 189h1v2h-1z M210 189h1v2h-1z M208 191h2v1h-2z M212 188h2v1h-2z M211 189h1v2h-1z M214 189h1v2h-1z M212 191h2v1h-2z M216 188h2v1h-2z M215 189h1v2h-1z M218 189h1v2h-1z M216 191h2v1h-2z M220 188h2v1h-2z M219 189h1v2h-1z M222 189h1v2h-1z M220 191h2v1h-2z M224 188h2v1h-2z M223 189h1v2h-1z M226 189h1v2h-1z M224 191h2v1h-2z M228 188h2v1h-2z M227 189h1v2h-1z M230 189h1v2h-1z M228 191h2v1h-2z M232 188h2v1h-2z M231 189h1v2h-1z M234 189h1v2h-1z M232 191h2v1h-2z M236 188h2v1h-2z M235 189h1v2h-1z M238 189h1v2h-1z M236 191h2v1h-2z M240 188h2v1h-2z M239 189h1v2h-1z M242 189h1v2h-1z M240 191h2v1h-2z M244 188h2v1h-2z M243 189h1v2h-1z M246 189h1v2h-1z M244 191h2v1h-2z M248 188h2v1h-2z M247 189h1v2h-1z M250 189h1v2h-1z M248 191h2v1h-2z M252 188h2v1h-2z M251 189h1v2h-1z M254 189h1v2h-1z M252 191h2v1h-2z M256 188h2v1h-2z M255 189h1v2h-1z M258 189h1v2h-1z M256 191h2v1h-2z M260 188h2v1h-2z M259 189h1v2h-1z M262 189h1v2h-1z M260 191h2v1h-2z M264 188h2v1h-2z M263 189h1v2h-1z M266 189h1v2h-1z M264 191h2v1h-2z M268 188h2v1h-2z M267 189h1v2h-1z M270 189h1v2h-1z M268 191h2v1h-2z M272 188h2v1h-2z M271 189h1v2h-1z M274 189h1v2h-1z M272 191h2v1h-2z M276 188h2v1h-2z M275 189h1v2h-1z M278 189h1v2h-1z M276 191h2v1h-2z M280 188h2v1h-2z M279 189h1v2h-1z M282 189h1v2h-1z M280 191h2v1h-2z M284 188h2v1h-2z M283 189h1v2h-1z M286 189h1v2h-1z M284 191h2v1h-2z M288 188h2v1h-2z M287 189h1v2h-1z M290 189h1v2h-1z M288 191h2v1h-2z M292 188h2v1h-2z M291 189h1v2h-1z M294 189h1v2h-1z M292 191h2v1h-2z M296 188h2v1h-2z M295 189h1v2h-1z M298 189h1v2h-1z M296 191h2v1h-2z M300 188h2v1h-2z M299 189h1v2h-1z M302 189h1v2h-1z M300 191h2v1h-2z M304 188h2v1h-2z M303 189h1v2h-1z M306 189h1v2h-1z M304 191h2v1h-2z M308 188h2v1h-2z M307 189h1v2h-1z M310 189h1v2h-1z M308 191h2v1h-2z M312 188h2v1h-2z M311 189h1v2h-1z M314 189h1v2h-1z M312 191h2v1h-2z M316 188h2v1h-2z M315 189h1v2h-1z M318 189h1v2h-1z M316 191h2v1h-2z M320 188h2v1h-2z M319 189h1v2h-1z M322 189h1v2h-1z M320 191h2v1h-2z M324 188h2v1h-2z M323 189h1v2h-1z M326 189h1v2h-1z M324 191h2v1h-2z M328 188h2v1h-2z M327 189h1v2h-1z M330 189h1v2h-1z M328 191h2v1h-2z M332 188h2v1h-2z M331 189h1v2h-1z M334 189h1v2h-1z M332 191h2v1h-2z M336 188h2v1h-2z M335 189h1v2h-1z M338 189h1v2h-1z M336 191h2v1h-2z M340 188h2v1h-2z M339 189h1v2h-1z M342 189h1v2h-1z M340 191h2v1h-2z M344 188h2v1h-2z M343 189h1v2h-1z M346 189h1v2h-1z M344 191h2v1h-2z M348 188h2v1h-2z M347 189h1v2h-1z M350 189h1v2h-1z M348 191h2v1h-2z M352 188h2v1h-2z M351 189h1v2h-1z M354 189h1v2h-1z M352 191h2v1h-2z M356 188h2v1h-2z M355 189h1v2h-1z M358 189h1v2h-1z M356 191h2v1h-2z M360 188h2v1h-2z M359 189h1v2h-1z M362 189h1v2h-1z M360 191h2v1h-2z M364 188h2v1h-2z M363 189h1v2h-1z M366 189h1v2h-1z M364 191h2v1h-2z M368 188h2v1h-2z M367 189h1v2h-1z M370 189h1v2h-1z M368 191h2v1h-2z M372 188h2v1h-2z M371 189h1v2h-1z M374 189h1v2h-1z M372 191h2v1h-2z M376 188h2v1h-2z M375 189h1v2h-1z M378 189h1v2h-1z M376 191h2v1h-2z M380 188h2v1h-2z M379 189h1v2h-1z M382 189h1v2h-1z M380 191h2v1h-2z M388 422h2v1h-2z M387 423h1v2h-1z M390 423h1v2h-1z M388 425h2v1h-2z M392 422h2v1h-2z M391 423h1v2h-1z M394 423h1v2h-1z M392 425h2v1h-2z M396 422h2v1h-2z M395 423h1v2h-1z M398 423h1v2h-1z M396 425h2v1h-2z M400 422h2v1h-2z M399 423h1v2h-1z M402 423h1v2h-1z M400 425h2v1h-2z M404 422h2v1h-2z M403 423h1v2h-1z M406 423h1v2h-1z M404 425h2v1h-2z M408 422h2v1h-2z M407 423h1v2h-1z M410 423h1v2h-1z M408 425h2v1h-2z M412 422h2v1h-2z M411 423h1v2h-1z M414 423h1v2h-1z M412 425h2v1h-2z M416 422h2v1h-2z M415 423h1v2h-1z M418 423h1v2h-1z M416 425h2v1h-2z M420 422h2v1h-2z M419 423h1v2h-1z M422 423h1v2h-1z M420 425h2v1h-2z M424 422h2v1h-2z M423 423h1v2h-1z M426 423h1v2h-1z M424 425h2v1h-2z M428 422h2v1h-2z M427 423h1v2h-1z M430 423h1v2h-1z M428 425h2v1h-2z M432 422h2v1h-2z M431 423h1v2h-1z M434 423h1v2h-1z M432 425h2v1h-2z M436 422h2v1h-2z M435 423h1v2h-1z M438 423h1v2h-1z M436 425h2v1h-2z M440 422h2v1h-2z M439 423h1v2h-1z M442 423h1v2h-1z M440 425h2v1h-2z M444 422h2v1h-2z M443 423h1v2h-1z M446 423h1v2h-1z M444 425h2v1h-2z M448 422h2v1h-2z M447 423h1v2h-1z M450 423h1v2h-1z M448 425h2v1h-2z M452 422h2v1h-2z M451 423h1v2h-1z M454 423h1v2h-1z M452 425h2v1h-2z M456 422h2v1h-2z M455 423h1v2h-1z M458 423h1v2h-1z M456 425h2v1h-2z M460 422h2v1h-2z M459 423h1v2h-1z M462 423h1v2h-1z M460 425h2v1h-2z M464 422h2v1h-2z M463 423h1v2h-1z M466 423h1v2h-1z M464 425h2v1h-2z M468 422h2v1h-2z M467 423h1v2h-1z M470 423h1v2h-1z M468 425h2v1h-2z M472 422h2v1h-2z M471 423h1v2h-1z M474 423h1v2h-1z M472 425h2v1h-2z M476 422h2v1h-2z M475 423h1v2h-1z M478 423h1v2h-1z M476 425h2v1h-2z M480 422h2v1h-2z M479 423h1v2h-1z M482 423h1v2h-1z M480 425h2v1h-2z M484 422h2v1h-2z M483 423h1v2h-1z M486 423h1v2h-1z M484 425h2v1h-2z M488 422h2v1h-2z M487 423h1v2h-1z M490 423h1v2h-1z M488 425h2v1h-2z M492 422h2v1h-2z M491 423h1v2h-1z M494 423h1v2h-1z M492 425h2v1h-2z M496 422h2v1h-2z M495 423h1v2h-1z M498 423h1v2h-1z M496 425h2v1h-2z M500 422h2v1h-2z M499 423h1v2h-1z M502 423h1v2h-1z M500 425h2v1h-2z M504 422h2v1h-2z M503 423h1v2h-1z M506 423h1v2h-1z M504 425h2v1h-2z M508 422h2v1h-2z M507 423h1v2h-1z M510 423h1v2h-1z M508 425h2v1h-2z M512 422h2v1h-2z M511 423h1v2h-1z M514 423h1v2h-1z M512 425h2v1h-2z M516 422h2v1h-2z M515 423h1v2h-1z M518 423h1v2h-1z M516 425h2v1h-2z M520 422h2v1h-2z M519 423h1v2h-1z M522 423h1v2h-1z M520 425h2v1h-2z M524 422h2v1h-2z M523 423h1v2h-1z M526 423h1v2h-1z M524 425h2v1h-2z M528 422h2v1h-2z M527 423h1v2h-1z M530 423h1v2h-1z M528 425h2v1h-2z M532 422h2v1h-2z M531 423h1v2h-1z M534 423h1v2h-1z M532 425h2v1h-2z M536 422h2v1h-2z M535 423h1v2h-1z M538 423h1v2h-1z M536 425h2v1h-2z M540 422h2v1h-2z M539 423h1v2h-1z M542 423h1v2h-1z M540 425h2v1h-2z M544 422h2v1h-2z M543 423h1v2h-1z M546 423h1v2h-1z M544 425h2v1h-2z M548 422h2v1h-2z M547 423h1v2h-1z M550 423h1v2h-1z M548 425h2v1h-2z M552 422h2v1h-2z M551 423h1v2h-1z M554 423h1v2h-1z M552 425h2v1h-2z M556 422h2v1h-2z M555 423h1v2h-1z M558 423h1v2h-1z M556 425h2v1h-2z M560 422h2v1h-2z M559 423h1v2h-1z M562 423h1v2h-1z M560 425h2v1h-2z M564 422h2v1h-2z M563 423h1v2h-1z M566 423h1v2h-1z M564 425h2v1h-2z M568 422h2v1h-2z M567 423h1v2h-1z M570 423h1v2h-1z M568 425h2v1h-2z M572 422h2v1h-2z M571 423h1v2h-1z M574 423h1v2h-1z M572 425h2v1h-2z M576 422h2v1h-2z M575 423h1v2h-1z M578 423h1v2h-1z M576 425h2v1h-2z M580 422h2v1h-2z M579 423h1v2h-1z M582 423h1v2h-1z M580 425h2v1h-2z M584 422h2v1h-2z M583 423h1v2h-1z M586 423h1v2h-1z M584 425h2v1h-2z M588 422h2v1h-2z M587 423h1v2h-1z M590 423h1v2h-1z M588 425h2v1h-2z M592 422h2v1h-2z M591 423h1v2h-1z M594 423h1v2h-1z M592 425h2v1h-2z M596 422h2v1h-2z M595 423h1v2h-1z M598 423h1v2h-1z M596 425h2v1h-2z M600 422h2v1h-2z M599 423h1v2h-1z M602 423h1v2h-1z M600 425h2v1h-2z M604 422h2v1h-2z M603 423h1v2h-1z M606 423h1v2h-1z M604 425h2v1h-2z M608 422h2v1h-2z M607 423h1v2h-1z M610 423h1v2h-1z M608 425h2v1h-2z M612 422h2v1h-2z M611 423h1v2h-1z M614 423h1v2h-1z M612 425h2v1h-2z M616 422h2v1h-2z M615 423h1v2h-1z M618 423h1v2h-1z M616 425h2v1h-2z M620 422h2v1h-2z M619 423h1v2h-1z M622 423h1v2h-1z M620 425h2v1h-2z M624 422h2v1h-2z M623 423h1v2h-1z M626 423h1v2h-1z M624 425h2v1h-2z M628 422h2v1h-2z M627 423h1v2h-1z M630 423h1v2h-1z M628 425h2v1h-2z M632 422h2v1h-2z M631 423h1v2h-1z M634 423h1v2h-1z M632 425h2v1h-2z M636 422h2v1h-2z M635 423h1v2h-1z M638 423h1v2h-1z M636 425h2v1h-2z M640 422h2v1h-2z M639 423h1v2h-1z M642 423h1v2h-1z M640 425h2v1h-2z M644 422h2v1h-2z M643 423h1v2h-1z M646 423h1v2h-1z M644 425h2v1h-2z M648 422h2v1h-2z M647 423h1v2h-1z M650 423h1v2h-1z M648 425h2v1h-2z M652 422h2v1h-2z M651 423h1v2h-1z M654 423h1v2h-1z M652 425h2v1h-2z M656 422h2v1h-2z M655 423h1v2h-1z M658 423h1v2h-1z M656 425h2v1h-2z M660 422h2v1h-2z M659 423h1v2h-1z M662 423h1v2h-1z M660 425h2v1h-2z M664 422h2v1h-2z M663 423h1v2h-1z M666 423h1v2h-1z M664 425h2v1h-2z M668 422h2v1h-2z M667 423h1v2h-1z M670 423h1v2h-1z M668 425h2v1h-2z M672 422h2v1h-2z M671 423h1v2h-1z M674 423h1v2h-1z M672 425h2v1h-2z M676 422h2v1h-2z M675 423h1v2h-1z M678 423h1v2h-1z M676 425h2v1h-2z M680 422h2v1h-2z M679 423h1v2h-1z M682 423h1v2h-1z M680 425h2v1h-2z M684 422h2v1h-2z M683 423h1v2h-1z M686 423h1v2h-1z M684 425h2v1h-2z M688 422h2v1h-2z M687 423h1v2h-1z M690 423h1v2h-1z M688 425h2v1h-2z M692 422h2v1h-2z M691 423h1v2h-1z M694 423h1v2h-1z M692 425h2v1h-2z M696 422h2v1h-2z M695 423h1v2h-1z M698 423h1v2h-1z M696 425h2v1h-2z M700 422h2v1h-2z M699 423h1v2h-1z M702 423h1v2h-1z M700 425h2v1h-2z M704 422h2v1h-2z M703 423h1v2h-1z M706 423h1v2h-1z M704 425h2v1h-2z M708 422h2v1h-2z M707 423h1v2h-1z M710 423h1v2h-1z M708 425h2v1h-2z M712 422h2v1h-2z M711 423h1v2h-1z M714 423h1v2h-1z M712 425h2v1h-2z M716 422h2v1h-2z M715 423h1v2h-1z M718 423h1v2h-1z M716 425h2v1h-2z M720 422h2v1h-2z M719 423h1v2h-1z M722 423h1v2h-1z M720 425h2v1h-2z M724 422h2v1h-2z M723 423h1v2h-1z M726 423h1v2h-1z M724 425h2v1h-2z M728 422h2v1h-2z M727 423h1v2h-1z M730 423h1v2h-1z M728 425h2v1h-2z M732 422h2v1h-2z M731 423h1v2h-1z M734 423h1v2h-1z M732 425h2v1h-2z M736 422h2v1h-2z M735 423h1v2h-1z M738 423h1v2h-1z M736 425h2v1h-2z M740 422h2v1h-2z M739 423h1v2h-1z M742 423h1v2h-1z M740 425h2v1h-2z M744 422h2v1h-2z M743 423h1v2h-1z M746 423h1v2h-1z M744 425h2v1h-2z M748 422h2v1h-2z M747 423h1v2h-1z M750 423h1v2h-1z M748 425h2v1h-2z M752 422h2v1h-2z M751 423h1v2h-1z M754 423h1v2h-1z M752 425h2v1h-2z M756 422h2v1h-2z M755 423h1v2h-1z M758 423h1v2h-1z M756 425h2v1h-2z M760 422h2v1h-2z M759 423h1v2h-1z M762 423h1v2h-1z M760 425h2v1h-2z M764 422h2v1h-2z M763 423h1v2h-1z M766 423h1v2h-1z M764 425h2v1h-2z M768 422h2v1h-2z M767 423h1v2h-1z M770 423h1v2h-1z M768 425h2v1h-2z M772 422h2v1h-2z M771 423h1v2h-1z M774 423h1v2h-1z M772 425h2v1h-2z M776 422h2v1h-2z M775 423h1v2h-1z M778 423h1v2h-1z M776 425h2v1h-2z M780 422h2v1h-2z M779 423h1v2h-1z M782 423h1v2h-1z M780 425h2v1h-2z M784 422h2v1h-2z M783 423h1v2h-1z M786 423h1v2h-1z M784 425h2v1h-2z M788 422h2v1h-2z M787 423h1v2h-1z M790 423h1v2h-1z M788 425h2v1h-2z M792 422h2v1h-2z M791 423h1v2h-1z M794 423h1v2h-1z M792 425h2v1h-2z M796 422h2v1h-2z M795 423h1v2h-1z M798 423h1v2h-1z M796 425h2v1h-2z M800 422h2v1h-2z M799 423h1v2h-1z M802 423h1v2h-1z M800 425h2v1h-2z M804 422h2v1h-2z M803 423h1v2h-1z M806 423h1v2h-1z M804 425h2v1h-2z M808 422h2v1h-2z M807 423h1v2h-1z M810 423h1v2h-1z M808 425h2v1h-2z M812 422h2v1h-2z M811 423h1v2h-1z M814 423h1v2h-1z M812 425h2v1h-2z M816 422h2v1h-2z M815 423h1v2h-1z M818 423h1v2h-1z M816 425h2v1h-2z " fill="#ff0000" shape-rendering="crispEdges" clip-path="url(#uc)"/>
<polyline points="381.5,187.5 382.5,184 382.5,212 383.5,213 383.5,270 384.5,271 384.5,330 385.5,331 385.5,390 386.5,391 386.5,421 388,423.5" fill="none" stroke="#ff0000" stroke-width="1.3"/>
<rect x="384" y="341" width="3" height="3" fill="#fff" stroke="#ff0000" stroke-width="1"/>
<clipPath id="lc"><rect x="87" y="540" width="740" height="151"/></clipPath>
<g clip-path="url(#lc)">
<rect x="96" y="615" width="722" height="1" fill="#000" shape-rendering="crispEdges"/>
<polyline points="136,922 140,748 144,862 148,706 152,744 156,852 160,916 164,889 168,867 172,886 176,900 180,892 184,887 188,804 192,744 196,819 200,876 204,830 208,901 212,836 216,850 220,668 224,601 228,652 232,627 236,627 240,557 244,667 248,678 252,623 256,698 260,841 264,871 268,641 272,689 276,826 280,622 284,572 288,617 292,662 296,617 300,624 304,612 308,592 312,646 316,582 320,639 324,587 328,592 332,617 336,622 340,597 344,654 348,617 352,612 356,617 360,617 364,617 368,602 372,650 376,652 380,697 384,609 388,479 392,580 396,519 400,536 404,510 408,482 412,487 416,500 420,518 424,498 428,478 432,481 436,521 440,508 444,542 448,487 452,492 456,510 460,525 464,510 468,510 472,505 476,497 480,512 484,494 488,536 492,526 496,497 500,504 504,515 508,495 512,532 516,542 520,508 524,498 528,540 532,527 536,498 540,472 544,413 548,368 552,417 556,393 560,398 564,383 568,418 572,383 576,413 580,353 584,403 588,378 592,383 596,398 600,383 604,408 608,353 612,368 616,413 620,383 624,413 628,388 632,373 636,338 640,378 644,358 648,383 652,418 656,388 660,358 664,393 668,423 672,403 676,403 680,403 684,383 688,373 692,388 696,413 700,373 704,393 708,373 712,403 716,393 720,398 724,383 728,383 732,423 736,446 740,388 744,378 748,358 752,388 756,368 760,383 764,393 768,373 772,378 776,408 780,393 784,393 788,400 792,413 796,402 800,423 804,388 808,353 812,363" fill="none" stroke="#7c7cff" stroke-width="1.1"/>
<rect x="383" y="542" width="1" height="147" fill="#ffff00" shape-rendering="crispEdges"/>
<polygon points="216.8,668 220,664.8 223.2,668 220,671.2" fill="#0000ff"/>
<polygon points="220.8,601 224,597.8 227.2,601 224,604.2" fill="#0000ff"/>
<polygon points="224.8,652 228,648.8 231.2,652 228,655.2" fill="#0000ff"/>
<polygon points="228.8,627 232,623.8 235.2,627 232,630.2" fill="#0000ff"/>
<polygon points="232.8,627 236,623.8 239.2,627 236,630.2" fill="#0000ff"/>
<polygon points="236.8,557 240,553.8 243.2,557 240,560.2" fill="#0000ff"/>
<polygon points="240.8,667 244,663.8 247.2,667 244,670.2" fill="#0000ff"/>
<polygon points="244.8,678 248,674.8 251.2,678 248,681.2" fill="#0000ff"/>
<polygon points="248.8,623 252,619.8 255.2,623 252,626.2" fill="#0000ff"/>
<polygon points="264.8,641 268,637.8 271.2,641 268,644.2" fill="#0000ff"/>
<polygon points="268.8,689 272,685.8 275.2,689 272,692.2" fill="#0000ff"/>
<polygon points="276.8,622 280,618.8 283.2,622 280,625.2" fill="#0000ff"/>
<polygon points="280.8,572 284,568.8 287.2,572 284,575.2" fill="#0000ff"/>
<polygon points="284.8,617 288,613.8 291.2,617 288,620.2" fill="#0000ff"/>
<polygon points="288.8,662 292,658.8 295.2,662 292,665.2" fill="#0000ff"/>
<polygon points="292.8,617 296,613.8 299.2,617 296,620.2" fill="#0000ff"/>
<polygon points="296.8,624 300,620.8 303.2,624 300,627.2" fill="#0000ff"/>
<polygon points="300.8,612 304,608.8 307.2,612 304,615.2" fill="#0000ff"/>
<polygon points="304.8,592 308,588.8 311.2,592 308,595.2" fill="#0000ff"/>
<polygon points="308.8,646 312,642.8 315.2,646 312,649.2" fill="#0000ff"/>
<polygon points="312.8,582 316,578.8 319.2,582 316,585.2" fill="#0000ff"/>
<polygon points="316.8,639 320,635.8 323.2,639 320,642.2" fill="#0000ff"/>
<polygon points="320.8,587 324,583.8 327.2,587 324,590.2" fill="#0000ff"/>
<polygon points="324.8,592 328,588.8 331.2,592 328,595.2" fill="#0000ff"/>
<polygon points="328.8,617 332,613.8 335.2,617 332,620.2" fill="#0000ff"/>
<polygon points="332.8,622 336,618.8 339.2,622 336,625.2" fill="#0000ff"/>
<polygon points="336.8,597 340,593.8 343.2,597 340,600.2" fill="#0000ff"/>
<polygon points="340.8,654 344,650.8 347.2,654 344,657.2" fill="#0000ff"/>
<polygon points="344.8,617 348,613.8 351.2,617 348,620.2" fill="#0000ff"/>
<polygon points="348.8,612 352,608.8 355.2,612 352,615.2" fill="#0000ff"/>
<polygon points="352.8,617 356,613.8 359.2,617 356,620.2" fill="#0000ff"/>
<polygon points="356.8,617 360,613.8 363.2,617 360,620.2" fill="#0000ff"/>
<polygon points="360.8,617 364,613.8 367.2,617 364,620.2" fill="#0000ff"/>
<polygon points="364.8,602 368,598.8 371.2,602 368,605.2" fill="#0000ff"/>
<polygon points="368.8,650 372,646.8 375.2,650 372,653.2" fill="#0000ff"/>
<polygon points="372.8,652 376,648.8 379.2,652 376,655.2" fill="#0000ff"/>
<polygon points="380.8,609 384,605.8 387.2,609 384,612.2" fill="#0000ff"/>
<polygon points="388.8,580 392,576.8 395.2,580 392,583.2" fill="#0000ff"/>
<polygon points="440.8,542 444,538.8 447.2,542 444,545.2" fill="#0000ff"/>
<polygon points="512.8,542 516,538.8 519.2,542 516,545.2" fill="#0000ff"/>
<polygon points="524.8,540 528,536.8 531.2,540 528,543.2" fill="#0000ff"/>
</g>
</svg>
<span class="t" style="left:16.0px;top:30.0px;font-size:12px;line-height:15px;font-weight:bold;letter-spacing:0.449px;">2025 Mar 21; (329) Svea occults J171354.44-065808.3 Observed by Toshihiro Horikawa</span>
<span class="t" style="left:548.4px;top:30.5px;font-size:12px;line-height:15px;letter-spacing:0.023px;">/ PSF-Frame Photometry /</span>
<span class="t" style="left:532.7px;top:42.5px;font-size:12px;line-height:15px;letter-spacing:-0.425px;">Dist.=297998958km Veloc.=14555m/sec</span>
<span class="t" style="left:24.2px;top:86.0px;font-size:12px;line-height:15px;letter-spacing:-0.926px;">6000</span>
<span class="t" style="left:24.2px;top:137.0px;font-size:12px;line-height:15px;letter-spacing:-0.926px;">5000</span>
<span class="t" style="left:24.2px;top:188.0px;font-size:12px;line-height:15px;letter-spacing:-0.926px;">4000</span>
<span class="t" style="left:24.2px;top:239.0px;font-size:12px;line-height:15px;letter-spacing:-0.926px;">3000</span>
<span class="t" style="left:24.2px;top:290.0px;font-size:12px;line-height:15px;letter-spacing:-0.926px;">2000</span>
<span class="t" style="left:24.2px;top:341.0px;font-size:12px;line-height:15px;letter-spacing:-0.926px;">1000</span>
<span class="t" style="left:50.7px;top:392.0px;font-size:12px;line-height:15px;letter-spacing:-1.887px;">0</span>
<span class="t" style="left:114.0px;top:415.5px;font-size:12px;line-height:15px;letter-spacing:-1.010px;">600</span>
<span class="t" style="left:234.0px;top:415.5px;font-size:12px;line-height:15px;letter-spacing:-1.010px;">630</span>
<span class="t" style="left:354.0px;top:415.5px;font-size:12px;line-height:15px;letter-spacing:-1.010px;">660</span>
<span class="t" style="left:474.0px;top:415.5px;font-size:12px;line-height:15px;letter-spacing:-1.010px;">690</span>
<span class="t" style="left:594.0px;top:415.5px;font-size:12px;line-height:15px;letter-spacing:-1.010px;">720</span>
<span class="t" style="left:714.0px;top:415.5px;font-size:12px;line-height:15px;letter-spacing:-1.010px;">750</span>
<span class="t" style="left:16.2px;top:432.5px;font-size:12px;line-height:15px;letter-spacing:-0.297px;">Exp=99.3msec / Frm No.645.0 / Frm Mid= 19h31m4.6238s,  End= 4.6735s / Event=Frm mid +0.0851s +/-0.010s / CctAngle=0.0deg</span>
<span class="t" style="left:378.7px;top:366.0px;font-size:13px;line-height:16px;font-weight:bold;letter-spacing:0.825px;">Event Time : 19h31m04.709s  +/- 0.030s  S/N=5.19</span>
<div style="left:8.0px;top:606.0px;width:740.0px;height:9.5px;background:#f0f0f0;overflow:hidden;"><span class="t" style="left:8px;top:5px;font-size:12px;line-height:14px;">S/N vs Error</span></div>
<div style="left:0.0px;top:615.5px;width:753.0px;height:92.5px;background:#f0f0f0;"></div>
<span class="t" style="left:8.0px;top:618.0px;font-size:12px;line-height:15px;letter-spacing:-0.127px;">Current-</span>
<span class="t" style="left:15.8px;top:634.3px;font-size:12px;line-height:15px;letter-spacing:-0.654px;">Frame</span>
<span class="t" style="left:68.6px;top:618.0px;font-size:12px;line-height:15px;letter-spacing:-0.679px;">Luminous</span>
<span class="t" style="left:67.6px;top:634.3px;font-size:12px;line-height:15px;letter-spacing:-0.111px;">Intensity</span>
<div class="tb" style="left:8.0px;top:651.2px;width:48.4px;height:18.8px;"></div>
<span class="t" style="left:11.4px;top:653.5px;font-size:12px;line-height:15px;letter-spacing:-0.786px;">645.0</span>
<div class="tb" style="left:64.2px;top:651.2px;width:55.4px;height:18.8px;"></div>
<span class="t" style="left:67.3px;top:653.5px;font-size:12px;line-height:15px;letter-spacing:-0.967px;">4195.1</span>
<div class="sbtrack" style="left:127.0px;top:621.0px;width:160.0px;height:17.0px;"></div>
<div class="btn" style="left:127.0px;top:621.0px;width:18.0px;height:17.0px;"><svg width="4" height="8" viewBox="0 0 4 8" style="position:absolute;left:50%;top:50%;margin-left:-2.0px;margin-top:-4.0px"><polygon points="4,0 4,8 0,4" fill="#000"/></svg></div>
<div class="btn" style="left:246.0px;top:621.0px;width:17.0px;height:17.0px;"></div>
<div class="btn" style="left:270.0px;top:621.0px;width:17.0px;height:17.0px;"><svg width="4" height="8" viewBox="0 0 4 8" style="position:absolute;left:50%;top:50%;margin-left:-2.0px;margin-top:-4.0px"><polygon points="0,0 0,8 4,4" fill="#000"/></svg></div>
<div class="btn" style="left:128.3px;top:646.0px;width:40.5px;height:24.0px;"></div>
<span class="t" style="left:132.2px;top:650.7px;font-size:12px;line-height:15px;letter-spacing:-0.772px;">-10Sec</span>
<div class="btn" style="left:172.2px;top:646.0px;width:32.7px;height:24.0px;"></div>
<span class="t" style="left:175.5px;top:650.7px;font-size:12px;line-height:15px;letter-spacing:-0.972px;">-1Sec</span>
<div class="btn" style="left:208.0px;top:646.0px;width:34.8px;height:24.0px;"></div>
<span class="t" style="left:211.0px;top:650.7px;font-size:12px;line-height:15px;letter-spacing:-1.072px;">+1Sec</span>
<div class="btn" style="left:246.0px;top:646.0px;width:41.0px;height:24.0px;"></div>
<span class="t" style="left:248.5px;top:650.7px;font-size:12px;line-height:15px;letter-spacing:-0.758px;">+10Sec</span>
<span class="t" style="left:293.5px;top:626.0px;font-size:12px;line-height:15px;letter-spacing:-0.506px;">Scale</span>
<div class="tb" style="left:332.2px;top:619.0px;width:22.2px;height:19.0px;"></div>
<span class="t" style="left:335.6px;top:621.0px;font-size:12px;line-height:15px;">2</span>
<div class="btn" style="left:356.2px;top:619.0px;width:15.2px;height:10.0px;"><svg width="6" height="3" viewBox="0 0 6 3" style="position:absolute;left:50%;top:50%;margin-left:-3.0px;margin-top:-1.5px"><polygon points="0,3 3,0 6,3" fill="#000"/></svg></div>
<div class="btn" style="left:356.2px;top:630.3px;width:15.2px;height:9.7px;"><svg width="6" height="3" viewBox="0 0 6 3" style="position:absolute;left:50%;top:50%;margin-left:-3.0px;margin-top:-1.5px"><polygon points="0,0 6,0 3,3" fill="#000"/></svg></div>
<span class="t" style="left:296.4px;top:650.0px;font-size:12px;line-height:15px;letter-spacing:-0.560px;">Radius</span>
<div class="tb" style="left:332.2px;top:651.2px;width:22.2px;height:18.8px;"></div>
<span class="t" style="left:335.6px;top:653.5px;font-size:12px;line-height:15px;">3</span>
<div class="btn" style="left:356.2px;top:651.2px;width:15.2px;height:9.8px;"><svg width="6" height="3" viewBox="0 0 6 3" style="position:absolute;left:50%;top:50%;margin-left:-3.0px;margin-top:-1.5px"><polygon points="0,3 3,0 6,3" fill="#000"/></svg></div>
<div class="btn" style="left:356.2px;top:662.5px;width:15.2px;height:9.5px;"><svg width="6" height="3" viewBox="0 0 6 3" style="position:absolute;left:50%;top:50%;margin-left:-3.0px;margin-top:-1.5px"><polygon points="0,0 6,0 3,3" fill="#000"/></svg></div>
<div class="chk" style="left:8.8px;top:680.8px;width:11.5px;height:11.5px;"><svg width="9" height="9" viewBox="0 0 9 9" style="position:absolute;left:1px;top:1px"><path d="M1 3.2 L3.4 5.6 L8 1 L8 3.4 L3.4 8 L1 5.6 Z" fill="#000"/></svg></div>
<span class="t" style="left:25.5px;top:678.7px;font-size:12px;line-height:15px;letter-spacing:-0.229px;">Show Image of Clicked point</span>
<div class="chk" style="left:8.8px;top:696.4px;width:11.5px;height:11.5px;"></div>
<span class="t" style="left:26.3px;top:694.7px;font-size:12px;line-height:15px;letter-spacing:-0.279px;">Reproduce Aperture Position</span>
<div class="btn" style="left:182.4px;top:678.7px;width:71.3px;height:23.5px;"></div>
<span class="t" style="left:188.4px;top:682.6px;font-size:12px;line-height:15px;letter-spacing:-0.525px;">Save Image</span>
<div class="btn" style="left:260.3px;top:678.7px;width:117.7px;height:23.5px;"></div>
<span class="t" style="left:272.0px;top:682.6px;font-size:12px;line-height:15px;letter-spacing:-0.158px;">Copy to ClipBoard</span>
<div class="gb" style="left:378.8px;top:620.6px;width:48.2px;height:80.4px;"></div>
<span class="t" style="left:384.8px;top:614.0px;font-size:12px;line-height:15px;letter-spacing:-0.157px;background:#f0f0f0;padding:0 1px;">Y Axis</span>
<span class="t" style="left:384.5px;top:626.4px;font-size:12px;line-height:15px;letter-spacing:-0.781px;">Min</span>
<span class="t" style="left:404.0px;top:626.4px;font-size:12px;line-height:15px;letter-spacing:-0.791px;">Max</span>
<div class="btn" style="left:383.2px;top:639.0px;width:17.0px;height:16.6px;"><svg width="8" height="4" viewBox="0 0 8 4" style="position:absolute;left:50%;top:50%;margin-left:-4.0px;margin-top:-2.0px"><polygon points="0,4 4,0 8,4" fill="#000"/></svg></div>
<div class="btn" style="left:383.2px;top:657.0px;width:17.0px;height:16.4px;"></div>
<div class="btn" style="left:383.2px;top:678.7px;width:17.0px;height:16.9px;"><svg width="8" height="4" viewBox="0 0 8 4" style="position:absolute;left:50%;top:50%;margin-left:-4.0px;margin-top:-2.0px"><polygon points="0,0 8,0 4,4" fill="#000"/></svg></div>
<div class="btn" style="left:405.4px;top:639.0px;width:17.6px;height:16.6px;"><svg width="8" height="4" viewBox="0 0 8 4" style="position:absolute;left:50%;top:50%;margin-left:-4.0px;margin-top:-2.0px"><polygon points="0,4 4,0 8,4" fill="#000"/></svg></div>
<div class="btn" style="left:405.4px;top:657.0px;width:17.6px;height:16.4px;"></div>
<div class="btn" style="left:405.4px;top:678.7px;width:17.6px;height:16.9px;"><svg width="8" height="4" viewBox="0 0 8 4" style="position:absolute;left:50%;top:50%;margin-left:-4.0px;margin-top:-2.0px"><polygon points="0,0 8,0 4,4" fill="#000"/></svg></div>
<div class="gb" style="left:430.3px;top:620.6px;width:60.1px;height:52.8px;"></div>
<span class="t" style="left:437.0px;top:614.0px;font-size:12px;line-height:15px;letter-spacing:-0.847px;background:#f0f0f0;padding:0 1px;">Line</span>
<div class="chk" style="left:438.6px;top:629.0px;width:11.0px;height:11.0px;"><svg width="9" height="9" viewBox="0 0 9 9" style="position:absolute;left:1px;top:1px"><path d="M1 3.2 L3.4 5.6 L8 1 L8 3.4 L3.4 8 L1 5.6 Z" fill="#000"/></svg></div>
<span class="t" style="left:456.4px;top:627.2px;font-size:12px;line-height:15px;letter-spacing:-0.268px;">Axis</span>
<div class="chk" style="left:438.6px;top:643.4px;width:11.0px;height:11.0px;"><svg width="9" height="9" viewBox="0 0 9 9" style="position:absolute;left:1px;top:1px"><path d="M1 3.2 L3.4 5.6 L8 1 L8 3.4 L3.4 8 L1 5.6 Z" fill="#000"/></svg></div>
<span class="t" style="left:456.4px;top:641.6px;font-size:12px;line-height:15px;letter-spacing:-0.690px;">Data</span>
<div class="btn" style="left:438.0px;top:655.6px;width:46.0px;height:13.9px;"></div>
<span class="t" style="left:444.7px;top:655.2px;font-size:12px;line-height:15px;letter-spacing:-0.208px;">Hilight</span>
<div class="btn" style="left:430.3px;top:678.7px;width:64.0px;height:26.3px;"></div>
<span class="t" style="left:434.7px;top:684.0px;font-size:12px;line-height:15px;letter-spacing:-0.440px;">[3D] Image</span>
<div class="gb" style="left:494.3px;top:620.6px;width:55.5px;height:52.8px;"></div>
<span class="t" style="left:501.0px;top:614.0px;font-size:12px;line-height:15px;letter-spacing:-0.658px;background:#f0f0f0;padding:0 1px;">Width</span>
<div class="rad" style="left:503.5px;top:633.2px;width:11.5px;height:11.5px;"><i></i></div>
<span class="t" style="left:520.5px;top:632.0px;font-size:12px;line-height:15px;letter-spacing:-0.804px;">Part</span>
<div class="rad" style="left:503.5px;top:653.9px;width:11.5px;height:11.5px;"></div>
<span class="t" style="left:520.5px;top:652.6px;font-size:12px;line-height:15px;letter-spacing:-0.810px;">Entire</span>
<div class="btn" style="left:555.8px;top:618.5px;width:142.5px;height:16.2px;"></div>
<span class="t" style="left:562.3px;top:619.4px;font-size:12px;line-height:15px;letter-spacing:-0.159px;">Correction for absorption</span>
<div class="btn" style="left:555.8px;top:638.0px;width:102.7px;height:16.6px;"></div>
<span class="t" style="left:566.2px;top:639.8px;font-size:12px;line-height:15px;letter-spacing:-0.284px;">Noise Reduction</span>
<div class="btn" style="left:662.2px;top:638.0px;width:36.1px;height:16.6px;"></div>
<span class="t" style="left:665.6px;top:639.8px;font-size:12px;line-height:15px;letter-spacing:-0.532px;">Reset</span>
<div class="chk" style="left:555.2px;top:659.8px;width:11.0px;height:11.0px;"><svg width="9" height="9" viewBox="0 0 9 9" style="position:absolute;left:1px;top:1px"><path d="M1 3.2 L3.4 5.6 L8 1 L8 3.4 L3.4 8 L1 5.6 Z" fill="#000"/></svg></div>
<span class="t" style="left:572.2px;top:658.0px;font-size:12px;line-height:15px;letter-spacing:-0.721px;">Information</span>
<div class="btn" style="left:711.8px;top:618.5px;width:36.2px;height:23.0px;"></div>
<span class="t" style="left:715.8px;top:622.8px;font-size:12px;line-height:15px;letter-spacing:-0.323px;">close</span>
<div class="chk" style="left:705.3px;top:657.0px;width:11.0px;height:11.0px;"><svg width="9" height="9" viewBox="0 0 9 9" style="position:absolute;left:1px;top:1px"><path d="M1 3.2 L3.4 5.6 L8 1 L8 3.4 L3.4 8 L1 5.6 Z" fill="#000"/></svg></div>
<span class="t" style="left:721.8px;top:655.2px;font-size:12px;line-height:15px;letter-spacing:-0.800px;">ID</span>
<div class="gb" style="left:654.3px;top:670.3px;width:94.4px;height:33.7px;"></div>
<span class="t" style="left:660.7px;top:663.3px;font-size:12px;line-height:15px;letter-spacing:-0.515px;background:#f0f0f0;padding:0 1px;">Object</span>
<div class="btnp" style="left:660.3px;top:680.0px;width:19.1px;height:17.0px;"></div>
<span class="t" style="left:666.0px;top:681.5px;font-size:12px;line-height:15px;color:#a0a0a0;">A</span>
<div class="btn" style="left:682.6px;top:680.0px;width:18.3px;height:17.0px;"></div>
<span class="t" style="left:688.2px;top:681.0px;font-size:12px;line-height:15px;">B</span>
<div class="btn" style="left:704.0px;top:680.0px;width:19.0px;height:17.0px;"></div>
<span class="t" style="left:710.0px;top:681.0px;font-size:12px;line-height:15px;">C</span>
<div class="btn" style="left:725.7px;top:680.0px;width:17.0px;height:17.0px;"></div>
<span class="t" style="left:730.7px;top:681.0px;font-size:12px;line-height:15px;">L</span>
<div class="btn" style="left:544.8px;top:678.7px;width:103.8px;height:26.3px;"></div>
<span class="t" style="left:556.6px;top:682.2px;font-size:15px;line-height:19px;font-weight:bold;letter-spacing:-0.939px;">Make Report</span></div>
<div class="win" style="left:844px;top:9px;width:192px;height:795px;background:#f0f0f0;"><div style="left:0.0px;top:0.0px;width:192.0px;height:24.0px;background:#f3f3f3;"></div>
<svg width="16" height="16" viewBox="0 0 16 16" style="position:absolute;left:3px;top:3.3000000000000007px"><path d="M0 1 H4 V0.5 H6.5 V1.5 H9 V0.5 H13 V1.5 H16 V16 H15 V15 H9 V16 H3 V15 H1 V14 H0 Z" fill="#0000a8"/><rect x="0" y="4" width="3.6" height="3.6" fill="#0000ff"/><rect x="13.5" y="4" width="2.5" height="11" fill="#0000ff"/><rect x="7" y="3" width="3" height="1.5" fill="#0000ff"/><rect x="0.5" y="9.6" width="3" height="2.4" fill="#0000f0"/><rect x="10.5" y="11" width="2.5" height="1.2" fill="#0000ff"/><rect x="1" y="0.8" width="3" height="1.2" fill="#000030"/><rect x="3" y="15" width="6" height="1" fill="#000"/><rect x="0" y="12.5" width="1.5" height="2" fill="#000"/><g fill="#f4f4ff"><rect x="1.2" y="2.2" width="1" height="1"/><rect x="3" y="3.3" width="1" height="1"/><rect x="10" y="1.4" width="1" height="1"/><rect x="12" y="1.4" width="1" height="1"/><rect x="14" y="2.3" width="1" height="1"/><rect x="1.2" y="12" width="1" height="1"/><rect x="2.3" y="13.2" width="1" height="1"/><rect x="6.2" y="14.2" width="1" height="1"/><rect x="8.2" y="13.3" width="1" height="1"/><rect x="10.2" y="13.3" width="1" height="1"/><rect x="12.2" y="12.3" width="1" height="1"/><rect x="14.2" y="13.3" width="1" height="1"/></g><rect x="0" y="8" width="16" height="1.3" fill="#ffff00"/><rect x="4.2" y="1" width="2.1" height="13.3" fill="#ffff00"/><polygon points="5.25,5.6 9,8.65 5.25,11.6 1.8,8.65" fill="#ffff00"/></svg>
<span class="t" style="left:24.6px;top:5.0px;font-size:12px;line-height:15px;color:#8e8e8e;letter-spacing:-0.686px;">Fre...</span>
<svg width="192" height="40" style="position:absolute;left:0;top:0" fill="none" stroke="#7a7a7a" stroke-width="1"><line x1="73" y1="12.5" x2="83" y2="12.5"/><rect x="118.5" y="7.5" width="9" height="9" rx="1"/><path d="M164.20000000000005 7 L174.20000000000005 17 M174.20000000000005 7 L164.20000000000005 17"/></svg>
<div class="gb" style="left:1.6px;top:31.0px;width:182.1px;height:50.0px;"></div>
<span class="t" style="left:9.0px;top:25.0px;font-size:11px;line-height:14px;font-weight:bold;letter-spacing:0.465px;background:#f0f0f0;">Spectral Effect</span>
<span class="t" style="left:9.0px;top:40.3px;font-size:11px;line-height:14px;letter-spacing:-1.281px;">CCD</span>
<div class="tb" style="left:40.7px;top:38.0px;width:86.0px;height:18.0px;"></div>
<span class="t" style="left:43.5px;top:40.0px;font-size:11px;line-height:14px;letter-spacing:-0.237px;">IMX290</span>
<div class="btn" style="left:110.0px;top:40.0px;width:15.0px;height:14.5px;"><svg width="7.0" height="3.5" viewBox="0 0 7.0 3.5" style="position:absolute;left:50%;top:50%;margin-left:-3.5px;margin-top:-1.75px"><polygon points="0,0 7.0,0 3.5,3.5" fill="#000"/></svg></div>
<div class="btn" style="left:130.0px;top:37.7px;width:46.8px;height:15.3px;"></div>
<span class="t" style="left:139.5px;top:38.0px;font-size:11px;line-height:14px;letter-spacing:-0.256px;">Graph</span>
<span class="t" style="left:9.0px;top:65.0px;font-size:11px;line-height:14px;letter-spacing:-0.547px;">Star</span>
<div class="tb" style="left:40.7px;top:61.0px;width:46.3px;height:18.0px;"></div>
<span class="t" style="left:43.5px;top:63.0px;font-size:11px;line-height:14px;letter-spacing:-0.984px;">A7</span>
<div class="btn" style="left:70.5px;top:63.0px;width:15.0px;height:14.5px;"><svg width="7.0" height="3.5" viewBox="0 0 7.0 3.5" style="position:absolute;left:50%;top:50%;margin-left:-3.5px;margin-top:-1.75px"><polygon points="0,0 7.0,0 3.5,3.5" fill="#000"/></svg></div>
<span class="t" style="left:90.6px;top:65.0px;font-size:11px;line-height:14px;letter-spacing:-0.541px;">or</span>
<span class="t" style="left:105.5px;top:65.0px;font-size:11px;line-height:14px;letter-spacing:-0.615px;">B-V</span>
<div class="tb" style="left:128.0px;top:61.0px;width:48.0px;height:19.6px;"></div>
<span class="t" style="left:131.0px;top:64.0px;font-size:11px;line-height:14px;letter-spacing:-0.105px;">0.30</span>
<div class="gb" style="left:1.6px;top:89.4px;width:182.1px;height:44.1px;"></div>
<span class="t" style="left:9.0px;top:83.0px;font-size:11px;line-height:14px;font-weight:bold;letter-spacing:0.387px;background:#f0f0f0;">Object&#x27;s Movement</span>
<span class="t" style="left:9.0px;top:95.5px;font-size:11px;line-height:14px;letter-spacing:-0.225px;">Distance</span>
<span class="t" style="left:94.5px;top:95.5px;font-size:11px;line-height:14px;letter-spacing:-0.178px;">Shadow&#x27;s Velocity</span>
<div class="tb" style="left:8.5px;top:109.4px;width:71.3px;height:19.6px;"></div>
<span class="t" style="left:11.7px;top:112.0px;font-size:11px;line-height:14px;letter-spacing:-0.163px;">297998958</span>
<span class="t" style="left:80.7px;top:119.0px;font-size:11px;line-height:14px;letter-spacing:-0.686px;">km</span>
<div class="tb" style="left:104.4px;top:109.4px;width:47.1px;height:19.6px;"></div>
<span class="t" style="left:107.8px;top:112.0px;font-size:11px;line-height:14px;letter-spacing:-0.252px;">14554.7</span>
<span class="t" style="left:152.7px;top:119.0px;font-size:11px;line-height:14px;letter-spacing:-0.009px;">m/sec</span>
<div class="gb" style="left:1.6px;top:139.3px;width:182.1px;height:106.7px;"></div>
<span class="t" style="left:9.0px;top:133.0px;font-size:11px;line-height:14px;font-weight:bold;letter-spacing:0.303px;background:#f0f0f0;">Frame range of Star &amp; BKG</span>
<span class="t" style="left:8.5px;top:145.0px;font-size:11px;line-height:14px;letter-spacing:-0.183px;">Appearance</span>
<span class="t" style="left:73.0px;top:145.5px;font-size:11px;line-height:14px;font-weight:bold;letter-spacing:0.229px;">before</span>
<span class="t" style="left:116.0px;top:145.5px;font-size:11px;line-height:14px;font-weight:bold;letter-spacing:0.289px;">Step</span>
<span class="t" style="left:152.0px;top:145.5px;font-size:11px;line-height:14px;font-weight:bold;letter-spacing:0.191px;">after</span>
<div class="tb" style="left:8.5px;top:159.7px;width:39.1px;height:18.3px;"></div>
<span class="t" style="left:11.7px;top:161.5px;font-size:11px;line-height:14px;letter-spacing:-0.126px;">5800.8</span>
<div class="btn" style="left:50.4px;top:159.0px;width:22.6px;height:15.0px;"></div>
<span class="t" style="left:55.5px;top:159.5px;font-size:11px;line-height:14px;letter-spacing:-0.557px;">Fix</span>
<div class="tb" style="left:81.4px;top:161.0px;width:28.3px;height:17.6px;"></div>
<span class="t" style="left:84.4px;top:163.0px;font-size:11px;line-height:14px;">-7</span>
<div class="btn" style="left:83.7px;top:180.4px;width:14.0px;height:16.1px;"><svg width="3" height="6" viewBox="0 0 3 6" style="position:absolute;left:50%;top:50%;margin-left:-1.5px;margin-top:-3.0px"><polygon points="3,0 3,6 0,3" fill="#000"/></svg></div>
<div class="btn" style="left:97.7px;top:180.4px;width:13.6px;height:16.1px;"><svg width="3" height="6" viewBox="0 0 3 6" style="position:absolute;left:50%;top:50%;margin-left:-1.5px;margin-top:-3.0px"><polygon points="0,0 0,6 3,3" fill="#000"/></svg></div>
<div class="tb" style="left:81.4px;top:203.4px;width:28.3px;height:17.6px;"></div>
<span class="t" style="left:84.4px;top:205.5px;font-size:11px;line-height:14px;">-25</span>
<div class="btn" style="left:83.7px;top:223.0px;width:14.0px;height:16.0px;"><svg width="3" height="6" viewBox="0 0 3 6" style="position:absolute;left:50%;top:50%;margin-left:-1.5px;margin-top:-3.0px"><polygon points="3,0 3,6 0,3" fill="#000"/></svg></div>
<div class="btn" style="left:97.7px;top:223.0px;width:13.6px;height:16.0px;"><svg width="3" height="6" viewBox="0 0 3 6" style="position:absolute;left:50%;top:50%;margin-left:-1.5px;margin-top:-3.0px"><polygon points="0,0 0,6 3,3" fill="#000"/></svg></div>
<div class="tb" style="left:117.0px;top:161.0px;width:26.5px;height:17.6px;"></div>
<span class="t" style="left:120.0px;top:163.0px;font-size:11px;line-height:14px;">0</span>
<div class="btn" style="left:117.0px;top:180.4px;width:13.6px;height:16.1px;"><svg width="3" height="6" viewBox="0 0 3 6" style="position:absolute;left:50%;top:50%;margin-left:-1.5px;margin-top:-3.0px"><polygon points="3,0 3,6 0,3" fill="#000"/></svg></div>
<div class="btn" style="left:130.6px;top:180.4px;width:14.0px;height:16.1px;"><svg width="3" height="6" viewBox="0 0 3 6" style="position:absolute;left:50%;top:50%;margin-left:-1.5px;margin-top:-3.0px"><polygon points="0,0 0,6 3,3" fill="#000"/></svg></div>
<div class="tb" style="left:117.0px;top:203.4px;width:26.5px;height:17.6px;"></div>
<span class="t" style="left:120.0px;top:205.5px;font-size:11px;line-height:14px;">0</span>
<div class="btn" style="left:117.0px;top:223.0px;width:13.6px;height:16.0px;"><svg width="3" height="6" viewBox="0 0 3 6" style="position:absolute;left:50%;top:50%;margin-left:-1.5px;margin-top:-3.0px"><polygon points="3,0 3,6 0,3" fill="#000"/></svg></div>
<div class="btn" style="left:130.6px;top:223.0px;width:14.0px;height:16.0px;"><svg width="3" height="6" viewBox="0 0 3 6" style="position:absolute;left:50%;top:50%;margin-left:-1.5px;margin-top:-3.0px"><polygon points="0,0 0,6 3,3" fill="#000"/></svg></div>
<div class="tb" style="left:153.4px;top:161.0px;width:24.6px;height:17.6px;"></div>
<span class="t" style="left:156.4px;top:163.0px;font-size:11px;line-height:14px;">30</span>
<div class="btn" style="left:153.4px;top:180.4px;width:13.9px;height:16.1px;"><svg width="3" height="6" viewBox="0 0 3 6" style="position:absolute;left:50%;top:50%;margin-left:-1.5px;margin-top:-3.0px"><polygon points="3,0 3,6 0,3" fill="#000"/></svg></div>
<div class="btn" style="left:167.3px;top:180.4px;width:13.7px;height:16.1px;"><svg width="3" height="6" viewBox="0 0 3 6" style="position:absolute;left:50%;top:50%;margin-left:-1.5px;margin-top:-3.0px"><polygon points="0,0 0,6 3,3" fill="#000"/></svg></div>
<div class="tb" style="left:153.4px;top:203.4px;width:24.6px;height:17.6px;"></div>
<span class="t" style="left:156.4px;top:205.5px;font-size:11px;line-height:14px;">4</span>
<div class="btn" style="left:153.4px;top:223.0px;width:13.9px;height:16.0px;"><svg width="3" height="6" viewBox="0 0 3 6" style="position:absolute;left:50%;top:50%;margin-left:-1.5px;margin-top:-3.0px"><polygon points="3,0 3,6 0,3" fill="#000"/></svg></div>
<div class="btn" style="left:167.3px;top:223.0px;width:13.7px;height:16.0px;"><svg width="3" height="6" viewBox="0 0 3 6" style="position:absolute;left:50%;top:50%;margin-left:-1.5px;margin-top:-3.0px"><polygon points="0,0 0,6 3,3" fill="#000"/></svg></div>
<span class="t" style="left:8.5px;top:177.3px;font-size:11px;line-height:14px;letter-spacing:-0.340px;">Intermidiate</span>
<div class="tb" style="left:8.5px;top:190.3px;width:39.1px;height:17.7px;"></div>
<span class="t" style="left:11.7px;top:192.5px;font-size:11px;line-height:14px;letter-spacing:-0.126px;">4195.1</span>
<div class="chk" style="left:51.0px;top:192.0px;width:11.5px;height:11.5px;"></div>
<span class="t" style="left:68.3px;top:191.0px;font-size:11px;line-height:14px;letter-spacing:-1.753px;">D</span>
<span class="t" style="left:8.5px;top:209.0px;font-size:11px;line-height:14px;letter-spacing:-0.208px;">Disappearance</span>
<div class="tb" style="left:8.5px;top:221.8px;width:39.1px;height:18.4px;"></div>
<span class="t" style="left:11.7px;top:224.0px;font-size:11px;line-height:14px;letter-spacing:-0.126px;">1221.8</span>
<div class="btn" style="left:50.4px;top:223.0px;width:22.6px;height:15.0px;"></div>
<span class="t" style="left:55.5px;top:223.5px;font-size:11px;line-height:14px;letter-spacing:-0.557px;">Fix</span>
<div class="gb" style="left:1.6px;top:256.3px;width:182.1px;height:44.7px;"></div>
<span class="t" style="left:9.0px;top:249.5px;font-size:11px;line-height:14px;font-weight:bold;letter-spacing:0.355px;background:#f0f0f0;">Frame Range for Processing</span>
<div class="tb" style="left:8.5px;top:266.0px;width:31.5px;height:16.7px;"></div>
<span class="t" style="left:11.7px;top:268.0px;font-size:11px;line-height:14px;letter-spacing:-0.535px;">-25</span>
<div class="tb" style="left:56.8px;top:266.0px;width:30.2px;height:16.7px;"></div>
<span class="t" style="left:60.0px;top:268.0px;font-size:11px;line-height:14px;letter-spacing:-0.375px;">30</span>
<div class="chk" style="left:104.4px;top:265.5px;width:11.5px;height:11.5px;"><svg width="9" height="9" viewBox="0 0 9 9" style="position:absolute;left:1px;top:1px"><path d="M1 3.2 L3.4 5.6 L8 1 L8 3.4 L3.4 8 L1 5.6 Z" fill="#000"/></svg></div>
<span class="t" style="left:122.0px;top:263.8px;font-size:11px;line-height:14px;letter-spacing:-0.181px;">SelectArea</span>
<div class="btn" style="left:8.5px;top:282.7px;width:15.8px;height:15.0px;"><svg width="3" height="6" viewBox="0 0 3 6" style="position:absolute;left:50%;top:50%;margin-left:-1.5px;margin-top:-3.0px"><polygon points="3,0 3,6 0,3" fill="#000"/></svg></div>
<div class="btn" style="left:24.3px;top:282.7px;width:16.4px;height:15.0px;"><svg width="3" height="6" viewBox="0 0 3 6" style="position:absolute;left:50%;top:50%;margin-left:-1.5px;margin-top:-3.0px"><polygon points="0,0 0,6 3,3" fill="#000"/></svg></div>
<div class="btn" style="left:56.8px;top:282.7px;width:15.7px;height:15.0px;"><svg width="3" height="6" viewBox="0 0 3 6" style="position:absolute;left:50%;top:50%;margin-left:-1.5px;margin-top:-3.0px"><polygon points="3,0 3,6 0,3" fill="#000"/></svg></div>
<div class="btn" style="left:72.5px;top:282.7px;width:15.8px;height:15.0px;"><svg width="3" height="6" viewBox="0 0 3 6" style="position:absolute;left:50%;top:50%;margin-left:-1.5px;margin-top:-3.0px"><polygon points="0,0 0,6 3,3" fill="#000"/></svg></div>
<span class="t" style="left:96.8px;top:285.0px;font-size:11px;line-height:14px;letter-spacing:-0.324px;">DataNum</span>
<div class="tb" style="left:144.6px;top:280.0px;width:31.1px;height:17.7px;"></div>
<span class="t" style="left:148.0px;top:281.5px;font-size:11px;line-height:14px;font-weight:bold;letter-spacing:0.375px;">56</span>
<div class="gb" style="left:1.6px;top:309.4px;width:182.1px;height:121.6px;"></div>
<span class="t" style="left:9.0px;top:303.0px;font-size:11px;line-height:14px;font-weight:bold;letter-spacing:0.476px;background:#f0f0f0;">Central Time of  Event</span>
<span class="t" style="left:8.5px;top:319.0px;font-size:11px;line-height:14px;font-weight:bold;letter-spacing:0.397px;">Component 1  [Single Star]</span>
<span class="t" style="left:8.5px;top:333.0px;font-size:11px;line-height:14px;letter-spacing:-0.472px;">Frame Number</span>
<span class="t" style="left:96.8px;top:333.0px;font-size:11px;line-height:14px;letter-spacing:-0.259px;">Offset Time</span>
<div class="tb" style="left:8.5px;top:348.0px;width:63.5px;height:18.4px;"></div>
<span class="t" style="left:11.7px;top:349.7px;font-size:12px;line-height:15px;font-weight:bold;letter-spacing:0.254px;">645.0</span>
<span class="t" style="left:81.4px;top:353.0px;font-size:11px;line-height:14px;font-weight:bold;">+</span>
<div class="tb" style="left:93.0px;top:348.0px;width:43.0px;height:18.4px;"></div>
<span class="t" style="left:96.0px;top:349.7px;font-size:12px;line-height:15px;font-weight:bold;letter-spacing:-0.090px;">85.1</span>
<span class="t" style="left:142.8px;top:355.7px;font-size:11px;line-height:14px;letter-spacing:-0.520px;">msec</span>
<span class="t" style="left:8.5px;top:373.2px;font-size:11px;line-height:14px;letter-spacing:-0.414px;">Error(1 sigma)</span>
<span class="t" style="left:77.5px;top:373.2px;font-size:11px;line-height:14px;font-weight:bold;letter-spacing:0.215px;">+/-</span>
<div class="tb" style="left:93.0px;top:368.0px;width:43.0px;height:18.4px;"></div>
<span class="t" style="left:96.0px;top:369.7px;font-size:12px;line-height:15px;font-weight:bold;letter-spacing:0.160px;">10.3</span>
<span class="t" style="left:142.8px;top:373.2px;font-size:11px;line-height:14px;letter-spacing:-0.520px;">msec</span>
<div style="left:8.5px;top:391.0px;width:168.3px;height:1.0px;background:#a8cdf0;"></div>
<span class="t" style="left:8.5px;top:394.0px;font-size:11px;line-height:14px;font-weight:bold;letter-spacing:0.444px;">Component 2   [Double Star]</span>
<span class="t" style="left:17.0px;top:412.7px;font-size:11px;line-height:14px;letter-spacing:-0.277px;">Offset Time</span>
<span class="t" style="left:81.4px;top:412.7px;font-size:11px;line-height:14px;font-weight:bold;">+</span>
<div class="tb" style="left:93.0px;top:409.4px;width:32.0px;height:17.6px;"></div>
<span class="t" style="left:129.0px;top:412.7px;font-size:11px;line-height:14px;letter-spacing:-0.402px;">millisecond</span>
<div class="gb" style="left:1.6px;top:440.0px;width:182.1px;height:43.6px;"></div>
<span class="t" style="left:9.0px;top:433.3px;font-size:11px;line-height:14px;font-weight:bold;letter-spacing:0.434px;background:#f0f0f0;">Speed of Fresnel Pattern</span>
<span class="t" style="left:8.5px;top:448.0px;font-size:11px;line-height:14px;letter-spacing:-0.238px;">Rate</span>
<span class="t" style="left:87.8px;top:448.0px;font-size:11px;line-height:14px;letter-spacing:-0.192px;">Contact Angle</span>
<div class="tb" style="left:8.5px;top:461.6px;width:47.1px;height:18.4px;"></div>
<span class="t" style="left:11.7px;top:463.0px;font-size:12px;line-height:15px;font-weight:bold;letter-spacing:0.333px;">1.0000</span>
<div class="tb" style="left:88.8px;top:461.6px;width:47.2px;height:18.4px;"></div>
<span class="t" style="left:91.7px;top:463.0px;font-size:12px;line-height:15px;font-weight:bold;letter-spacing:0.204px;">0.0</span>
<span class="t" style="left:144.6px;top:468.0px;font-size:11px;line-height:14px;letter-spacing:-0.344px;">degree</span>
<div class="gb" style="left:1.6px;top:492.0px;width:182.1px;height:65.0px;"></div>
<div style="left:7.0px;top:488.0px;width:152.0px;height:13.0px;background:#f0f0f0;"></div>
<div class="chk" style="left:9.0px;top:489.0px;width:11.5px;height:11.5px;"></div>
<span class="t" style="left:27.8px;top:487.0px;font-size:11px;line-height:14px;font-weight:bold;letter-spacing:0.375px;">Double Star Analyzing</span>
<span class="t" style="left:8.5px;top:502.0px;font-size:11px;line-height:14px;letter-spacing:-0.188px;">Step Hight</span>
<span class="t" style="left:97.5px;top:502.0px;font-size:11px;line-height:14px;letter-spacing:-0.235px;">Time Difference</span>
<div class="btn" style="left:9.0px;top:518.8px;width:16.0px;height:11.5px;"><svg width="6" height="3" viewBox="0 0 6 3" style="position:absolute;left:50%;top:50%;margin-left:-3.0px;margin-top:-1.5px"><polygon points="0,3 3,0 6,3" fill="#a0a0a0"/></svg></div>
<div class="btn" style="left:9.0px;top:531.0px;width:16.0px;height:11.3px;"><svg width="6" height="3" viewBox="0 0 6 3" style="position:absolute;left:50%;top:50%;margin-left:-3.0px;margin-top:-1.5px"><polygon points="0,0 6,0 3,3" fill="#a0a0a0"/></svg></div>
<div class="btn" style="left:26.0px;top:518.8px;width:15.0px;height:11.5px;"><svg width="6" height="3" viewBox="0 0 6 3" style="position:absolute;left:50%;top:50%;margin-left:-3.0px;margin-top:-1.5px"><polygon points="0,3 3,0 6,3" fill="#a0a0a0"/></svg></div>
<div class="btn" style="left:26.0px;top:531.0px;width:15.0px;height:11.3px;"><svg width="6" height="3" viewBox="0 0 6 3" style="position:absolute;left:50%;top:50%;margin-left:-3.0px;margin-top:-1.5px"><polygon points="0,0 6,0 3,3" fill="#a0a0a0"/></svg></div>
<div class="tb" style="left:40.7px;top:518.8px;width:29.3px;height:19.2px;"></div>
<span class="t" style="left:42.0px;top:521.0px;font-size:11px;line-height:14px;color:#8a8a8a;letter-spacing:-0.355px;">50.0</span>
<span class="t" style="left:65.0px;top:535.5px;font-size:9px;line-height:11px;letter-spacing:-0.016px;">%</span>
<span class="t" style="left:13.0px;top:542.0px;font-size:11px;line-height:14px;">1</span>
<span class="t" style="left:27.0px;top:542.0px;font-size:11px;line-height:14px;letter-spacing:-0.766px;">0.1</span>
<div class="btn" style="left:80.7px;top:518.8px;width:15.3px;height:11.5px;"><svg width="6" height="3" viewBox="0 0 6 3" style="position:absolute;left:50%;top:50%;margin-left:-3.0px;margin-top:-1.5px"><polygon points="0,3 3,0 6,3" fill="#a0a0a0"/></svg></div>
<div class="btn" style="left:80.7px;top:531.0px;width:15.3px;height:11.3px;"><svg width="6" height="3" viewBox="0 0 6 3" style="position:absolute;left:50%;top:50%;margin-left:-3.0px;margin-top:-1.5px"><polygon points="0,0 6,0 3,3" fill="#a0a0a0"/></svg></div>
<div class="btn" style="left:96.3px;top:518.8px;width:15.2px;height:11.5px;"><svg width="6" height="3" viewBox="0 0 6 3" style="position:absolute;left:50%;top:50%;margin-left:-3.0px;margin-top:-1.5px"><polygon points="0,3 3,0 6,3" fill="#a0a0a0"/></svg></div>
<div class="btn" style="left:96.3px;top:531.0px;width:15.2px;height:11.3px;"><svg width="6" height="3" viewBox="0 0 6 3" style="position:absolute;left:50%;top:50%;margin-left:-3.0px;margin-top:-1.5px"><polygon points="0,0 6,0 3,3" fill="#a0a0a0"/></svg></div>
<div class="btn" style="left:112.0px;top:518.8px;width:15.4px;height:11.5px;"><svg width="6" height="3" viewBox="0 0 6 3" style="position:absolute;left:50%;top:50%;margin-left:-3.0px;margin-top:-1.5px"><polygon points="0,3 3,0 6,3" fill="#a0a0a0"/></svg></div>
<div class="btn" style="left:112.0px;top:531.0px;width:15.4px;height:11.3px;"><svg width="6" height="3" viewBox="0 0 6 3" style="position:absolute;left:50%;top:50%;margin-left:-3.0px;margin-top:-1.5px"><polygon points="0,0 6,0 3,3" fill="#a0a0a0"/></svg></div>
<div class="tb" style="left:128.5px;top:518.8px;width:47.8px;height:19.2px;"></div>
<span class="t" style="left:132.0px;top:521.0px;font-size:11px;line-height:14px;color:#8a8a8a;">0</span>
<span class="t" style="left:129.0px;top:538.0px;font-size:11px;line-height:14px;letter-spacing:-0.402px;">millisecond</span>
<div class="gb" style="left:1.6px;top:564.0px;width:182.1px;height:51.8px;"></div>
<div style="left:7.0px;top:560.0px;width:161.0px;height:13.0px;background:#f0f0f0;"></div>
<div class="chk" style="left:10.0px;top:561.0px;width:11.5px;height:11.5px;"></div>
<span class="t" style="left:28.5px;top:559.0px;font-size:11px;line-height:14px;font-weight:bold;letter-spacing:0.349px;">Star&#x27;s Angular Diameter</span>
<div class="btn" style="left:9.0px;top:575.6px;width:16.0px;height:10.4px;"><svg width="6" height="3" viewBox="0 0 6 3" style="position:absolute;left:50%;top:50%;margin-left:-3.0px;margin-top:-1.5px"><polygon points="0,3 3,0 6,3" fill="#a0a0a0"/></svg></div>
<div class="btn" style="left:9.0px;top:587.0px;width:16.0px;height:11.0px;"><svg width="6" height="3" viewBox="0 0 6 3" style="position:absolute;left:50%;top:50%;margin-left:-3.0px;margin-top:-1.5px"><polygon points="0,0 6,0 3,3" fill="#a0a0a0"/></svg></div>
<div class="tb" style="left:25.5px;top:575.0px;width:31.3px;height:18.3px;"></div>
<span class="t" style="left:28.5px;top:577.0px;font-size:11px;line-height:14px;color:#8a8a8a;letter-spacing:-0.266px;">0.0</span>
<span class="t" style="left:58.0px;top:577.8px;font-size:11px;line-height:14px;letter-spacing:-0.257px;">milli arc second</span>
<span class="t" style="left:17.0px;top:601.2px;font-size:11px;line-height:14px;letter-spacing:-0.148px;">Intensity at event centre:</span>
<div class="tb" style="left:137.0px;top:595.0px;width:31.8px;height:18.0px;background:#f4f4f4;"></div>
<span class="t" style="left:140.5px;top:596.1px;font-size:12px;line-height:15px;color:#8a8a8a;letter-spacing:0.360px;">25.0</span>
<span class="t" style="left:169.4px;top:602.5px;font-size:9px;line-height:11px;letter-spacing:-0.616px;">%</span>
<div class="gb" style="left:1.6px;top:624.0px;width:182.1px;height:48.0px;"></div>
<span class="t" style="left:9.0px;top:617.6px;font-size:11px;line-height:14px;font-weight:bold;letter-spacing:0.169px;background:#f0f0f0;">Processing</span>
<div class="rad" style="left:9.0px;top:635.2px;width:11.0px;height:11.0px;"><i></i></div>
<span class="t" style="left:27.0px;top:633.7px;font-size:11px;line-height:14px;letter-spacing:-0.195px;">for Occultation</span>
<div class="rad" style="left:105.5px;top:635.2px;width:11.0px;height:11.0px;"></div>
<span class="t" style="left:122.8px;top:633.7px;font-size:11px;line-height:14px;letter-spacing:-0.347px;">for Grazing</span>
<span class="t" style="left:6.0px;top:654.0px;font-size:11px;line-height:14px;letter-spacing:-0.404px;">Sum-Squared Error</span>
<div class="tb" style="left:98.6px;top:649.9px;width:79.4px;height:18.1px;"></div>
<span class="t" style="left:102.0px;top:651.1px;font-size:12px;line-height:15px;font-weight:bold;letter-spacing:0.102px;">138449571</span>
<div class="chk" style="left:4.0px;top:682.0px;width:11.5px;height:11.5px;"><svg width="9" height="9" viewBox="0 0 9 9" style="position:absolute;left:1px;top:1px"><path d="M1 3.2 L3.4 5.6 L8 1 L8 3.4 L3.4 8 L1 5.6 Z" fill="#000"/></svg></div>
<span class="t" style="left:20.5px;top:680.4px;font-size:11px;line-height:14px;letter-spacing:-0.261px;">Mag drop</span>
<div class="tb" style="left:70.6px;top:677.8px;width:39.4px;height:18.2px;"></div>
<span class="t" style="left:73.8px;top:680.0px;font-size:11px;line-height:14px;letter-spacing:-0.699px;">1.7</span>
<span class="t" style="left:116.6px;top:680.4px;font-size:11px;line-height:14px;letter-spacing:-0.213px;">considered</span>
<div class="sunk" style="left:4.4px;top:699.6px;width:175.6px;height:8.1px;"></div>
<div class="btn" style="left:4.4px;top:711.8px;width:176.6px;height:23.0px;"></div>
<span class="t" style="left:27.4px;top:716.1px;font-size:12px;line-height:15px;font-weight:bold;letter-spacing:-0.034px;">Fit to Diffraction Curve</span>
<div class="chk" style="left:8.5px;top:744.0px;width:11.5px;height:11.5px;"><svg width="9" height="9" viewBox="0 0 9 9" style="position:absolute;left:1px;top:1px"><path d="M1 3.2 L3.4 5.6 L8 1 L8 3.4 L3.4 8 L1 5.6 Z" fill="#000"/></svg></div>
<span class="t" style="left:27.0px;top:742.7px;font-size:11px;line-height:14px;letter-spacing:-0.312px;">Pop up</span>
<div class="btn" style="left:64.6px;top:739.4px;width:114.0px;height:20.6px;"></div>
<span class="t" style="left:77.5px;top:743.2px;font-size:12px;line-height:15px;font-weight:bold;letter-spacing:-0.063px;">Magnitude Calc</span>
<div style="left:0.0px;top:762.3px;width:184.0px;height:2.0px;border-top:1px solid #a0a0a0;border-bottom:1px solid #fff;box-sizing:border-box;"></div>
<div class="chk" style="left:48.5px;top:771.6px;width:11.5px;height:11.5px;"></div>
<span class="t" style="left:66.5px;top:770.0px;font-size:11px;line-height:14px;letter-spacing:-0.391px;">More</span></div>
<div class="win" style="left:1044px;top:11px;width:467px;height:855px;background:#f0f0f0;box-shadow:0 0 0 1px rgba(30,30,40,0.5),0 2px 12px rgba(0,0,0,0.32),0 24px 36px -8px rgba(0,0,0,0.55);"><div style="left:0.0px;top:0.0px;width:467.0px;height:29.0px;background:#f3f3f3;"></div>
<svg width="16" height="16" viewBox="0 0 16 16" style="position:absolute;left:8px;top:5.5px"><path d="M0 1 H4 V0.5 H6.5 V1.5 H9 V0.5 H13 V1.5 H16 V16 H15 V15 H9 V16 H3 V15 H1 V14 H0 Z" fill="#0000a8"/><rect x="0" y="4" width="3.6" height="3.6" fill="#0000ff"/><rect x="13.5" y="4" width="2.5" height="11" fill="#0000ff"/><rect x="7" y="3" width="3" height="1.5" fill="#0000ff"/><rect x="0.5" y="9.6" width="3" height="2.4" fill="#0000f0"/><rect x="10.5" y="11" width="2.5" height="1.2" fill="#0000ff"/><rect x="1" y="0.8" width="3" height="1.2" fill="#000030"/><rect x="3" y="15" width="6" height="1" fill="#000"/><rect x="0" y="12.5" width="1.5" height="2" fill="#000"/><g fill="#f4f4ff"><rect x="1.2" y="2.2" width="1" height="1"/><rect x="3" y="3.3" width="1" height="1"/><rect x="10" y="1.4" width="1" height="1"/><rect x="12" y="1.4" width="1" height="1"/><rect x="14" y="2.3" width="1" height="1"/><rect x="1.2" y="12" width="1" height="1"/><rect x="2.3" y="13.2" width="1" height="1"/><rect x="6.2" y="14.2" width="1" height="1"/><rect x="8.2" y="13.3" width="1" height="1"/><rect x="10.2" y="13.3" width="1" height="1"/><rect x="12.2" y="12.3" width="1" height="1"/><rect x="14.2" y="13.3" width="1" height="1"/></g><rect x="0" y="8" width="16" height="1.3" fill="#ffff00"/><rect x="4.2" y="1" width="2.1" height="13.3" fill="#ffff00"/><polygon points="5.25,5.6 9,8.65 5.25,11.6 1.8,8.65" fill="#ffff00"/></svg>
<span class="t" style="left:29.0px;top:7.5px;font-size:12px;line-height:15px;letter-spacing:0.040px;">Magnitude Calculator</span>
<svg width="467" height="40" style="position:absolute;left:0;top:0" fill="none" stroke="#000" stroke-width="1"><line x1="348" y1="14.5" x2="358" y2="14.5"/><rect x="393.5" y="9.5" width="9" height="9" rx="1"/><path d="M439 9 L449 19 M449 9 L439 19"/></svg>
<div class="gb" style="left:1.0px;top:36.2px;width:141.6px;height:37.6px;"></div>
<span class="t" style="left:8.3px;top:30.0px;font-size:11px;line-height:14px;font-weight:bold;letter-spacing:0.345px;background:#f0f0f0;">Selection for analysis</span>
<div class="rad" style="left:9.0px;top:44.9px;width:11.0px;height:11.0px;"><i></i></div>
<span class="t" style="left:28.0px;top:43.4px;font-size:11px;line-height:14px;font-weight:bold;letter-spacing:0.134px;">Timing only</span>
<div class="rad" style="left:9.0px;top:58.4px;width:11.0px;height:11.0px;"></div>
<span class="t" style="left:28.0px;top:57.0px;font-size:11px;line-height:14px;font-weight:bold;letter-spacing:0.329px;">Doublestar and time</span>
<span class="t" style="left:68.3px;top:78.8px;font-size:13px;line-height:16px;font-weight:bold;letter-spacing:1.047px;">First Event</span>
<span class="t" style="left:48.5px;top:103.0px;font-size:13px;line-height:16px;font-weight:bold;letter-spacing:1.211px;">Second Event</span>
<span class="t" style="left:80.7px;top:129.0px;font-size:12px;line-height:15px;font-weight:bold;letter-spacing:-0.171px;">Combined</span>
<div class="gb" style="left:150.4px;top:36.2px;width:141.4px;height:116.2px;"></div>
<span class="t" style="left:158.7px;top:30.0px;font-size:11px;line-height:14px;font-weight:bold;letter-spacing:0.341px;background:#f0f0f0;">Statistic Calculation</span>
<span class="t" style="left:170.0px;top:42.0px;font-size:14px;line-height:18px;letter-spacing:0.220px;">Luminous Intensity</span>
<span class="t" style="left:167.0px;top:56.5px;font-size:12px;line-height:15px;letter-spacing:-0.641px;">Average</span>
<span class="t" style="left:224.3px;top:56.5px;font-size:12px;line-height:15px;letter-spacing:-0.382px;">Error Margin</span>
<div class="tb" style="left:160.0px;top:72.8px;width:47.7px;height:18.6px;"></div>
<span class="t" style="left:163.5px;top:74.6px;font-size:12px;line-height:15px;font-weight:bold;letter-spacing:0.283px;">1605.7</span>
<span class="t" style="left:213.0px;top:76.1px;font-size:12px;line-height:15px;font-weight:bold;letter-spacing:0.780px;">+/−</span>
<div class="tb" style="left:239.4px;top:72.8px;width:40.4px;height:18.6px;"></div>
<span class="t" style="left:243.0px;top:74.6px;font-size:12px;line-height:15px;font-weight:bold;letter-spacing:0.194px;">109.2</span>
<div class="tb" style="left:160.0px;top:96.0px;width:47.7px;height:18.5px;"></div>
<span class="t" style="left:163.5px;top:97.8px;font-size:12px;line-height:15px;font-weight:bold;letter-spacing:0.394px;">862.7</span>
<span class="t" style="left:213.0px;top:99.2px;font-size:12px;line-height:15px;font-weight:bold;letter-spacing:0.780px;">+/−</span>
<div class="tb" style="left:239.4px;top:96.0px;width:40.4px;height:18.5px;"></div>
<span class="t" style="left:243.0px;top:97.8px;font-size:12px;line-height:15px;font-weight:bold;letter-spacing:0.360px;">65.2</span>
<div class="tb" style="left:160.0px;top:126.5px;width:47.7px;height:19.1px;"></div>
<span class="t" style="left:163.5px;top:128.6px;font-size:12px;line-height:15px;font-weight:bold;letter-spacing:0.283px;">2468.5</span>
<span class="t" style="left:213.0px;top:130.1px;font-size:12px;line-height:15px;font-weight:bold;letter-spacing:0.780px;">+/−</span>
<div class="tb" style="left:239.4px;top:126.5px;width:40.4px;height:19.1px;"></div>
<span class="t" style="left:243.0px;top:128.6px;font-size:12px;line-height:15px;font-weight:bold;letter-spacing:0.194px;">174.4</span>
<div style="left:8.3px;top:160.0px;width:224.3px;height:2.0px;background:#6aaee8;border-bottom:1px solid #cfe4f8;box-sizing:border-box;"></div>
<div class="gb" style="left:300.5px;top:36.2px;width:142.3px;height:81.0px;"></div>
<span class="t" style="left:308.7px;top:30.0px;font-size:11px;line-height:14px;font-weight:bold;letter-spacing:0.127px;background:#f0f0f0;">Estimation</span>
<span class="t" style="left:323.6px;top:44.0px;font-size:14px;line-height:18px;font-weight:bold;letter-spacing:0.044px;">Magnitude</span>
<span class="t" style="left:318.4px;top:57.0px;font-size:12px;line-height:15px;letter-spacing:-0.972px;">Mag.</span>
<span class="t" style="left:374.5px;top:57.0px;font-size:12px;line-height:15px;letter-spacing:-0.432px;">Error Margin</span>
<div class="tb" style="left:316.4px;top:72.8px;width:39.6px;height:18.6px;"></div>
<span class="t" style="left:319.5px;top:74.6px;font-size:12px;line-height:15px;font-weight:bold;letter-spacing:0.234px;">13.17</span>
<span class="t" style="left:361.9px;top:76.1px;font-size:12px;line-height:15px;font-weight:bold;letter-spacing:0.747px;">+/−</span>
<div class="tb" style="left:388.4px;top:72.8px;width:39.3px;height:18.6px;"></div>
<span class="t" style="left:391.5px;top:74.6px;font-size:12px;line-height:15px;font-weight:bold;letter-spacing:0.285px;">0.10</span>
<div class="tb" style="left:316.4px;top:96.0px;width:39.6px;height:18.5px;"></div>
<span class="t" style="left:319.5px;top:97.8px;font-size:12px;line-height:15px;font-weight:bold;letter-spacing:0.234px;">13.84</span>
<span class="t" style="left:361.9px;top:99.2px;font-size:12px;line-height:15px;font-weight:bold;letter-spacing:0.747px;">+/−</span>
<div class="tb" style="left:388.4px;top:96.0px;width:39.3px;height:18.5px;"></div>
<span class="t" style="left:391.5px;top:97.8px;font-size:12px;line-height:15px;font-weight:bold;letter-spacing:0.449px;">0.11</span>
<span class="t" style="left:298.8px;top:119.7px;font-size:12px;line-height:15px;font-weight:bold;letter-spacing:0.191px;">Assuming Pair&#x27;s Mag. as:</span>
<div class="tb" style="left:314.3px;top:137.5px;width:39.9px;height:18.0px;"></div>
<span class="t" style="left:318.4px;top:139.0px;font-size:12px;line-height:15px;font-weight:bold;letter-spacing:-0.286px;">12.70</span>
<div class="btn" style="left:354.6px;top:134.4px;width:14.9px;height:11.1px;"><svg width="6" height="3" viewBox="0 0 6 3" style="position:absolute;left:50%;top:50%;margin-left:-3.0px;margin-top:-1.5px"><polygon points="0,3 3,0 6,3" fill="#000"/></svg></div>
<div class="btn" style="left:354.6px;top:147.0px;width:14.9px;height:11.0px;"><svg width="6" height="3" viewBox="0 0 6 3" style="position:absolute;left:50%;top:50%;margin-left:-3.0px;margin-top:-1.5px"><polygon points="0,0 6,0 3,3" fill="#000"/></svg></div>
<div class="btn" style="left:370.0px;top:134.4px;width:15.5px;height:11.1px;"><svg width="6" height="3" viewBox="0 0 6 3" style="position:absolute;left:50%;top:50%;margin-left:-3.0px;margin-top:-1.5px"><polygon points="0,3 3,0 6,3" fill="#000"/></svg></div>
<div class="btn" style="left:370.0px;top:147.0px;width:15.5px;height:11.0px;"><svg width="6" height="3" viewBox="0 0 6 3" style="position:absolute;left:50%;top:50%;margin-left:-3.0px;margin-top:-1.5px"><polygon points="0,0 6,0 3,3" fill="#000"/></svg></div>
<div class="btn" style="left:386.0px;top:134.4px;width:15.8px;height:11.1px;"><svg width="6" height="3" viewBox="0 0 6 3" style="position:absolute;left:50%;top:50%;margin-left:-3.0px;margin-top:-1.5px"><polygon points="0,3 3,0 6,3" fill="#000"/></svg></div>
<div class="btn" style="left:386.0px;top:147.0px;width:15.8px;height:11.0px;"><svg width="6" height="3" viewBox="0 0 6 3" style="position:absolute;left:50%;top:50%;margin-left:-3.0px;margin-top:-1.5px"><polygon points="0,0 6,0 3,3" fill="#000"/></svg></div>
<div class="gb" style="left:1.0px;top:173.5px;width:238.4px;height:112.7px;"></div>
<span class="t" style="left:8.3px;top:168.3px;font-size:11px;line-height:14px;letter-spacing:-0.149px;background:#f0f0f0;">Select the BaseTime for Event Time</span>
<span class="t" style="left:20.0px;top:188.0px;font-size:11px;line-height:14px;letter-spacing:-0.235px;">Selected frame (Base) : No.</span>
<div class="tb" style="left:156.0px;top:183.7px;width:77.6px;height:18.7px;"></div>
<div class="rad" style="left:17.5px;top:206.2px;width:11.0px;height:11.0px;"><i></i></div>
<span class="t" style="left:34.0px;top:204.7px;font-size:11px;line-height:14px;letter-spacing:-0.302px;">First field</span>
<div class="rad" style="left:105.5px;top:206.2px;width:11.0px;height:11.0px;"></div>
<span class="t" style="left:122.5px;top:204.7px;font-size:11px;line-height:14px;letter-spacing:-0.171px;">Second field</span>
<span class="t" style="left:208.3px;top:204.0px;font-size:11px;line-height:14px;letter-spacing:-0.316px;">Graph</span>
<div class="tb" style="left:16.0px;top:223.9px;width:19.0px;height:18.6px;"></div>
<span class="t" style="left:19.7px;top:226.2px;font-size:11px;line-height:14px;letter-spacing:0.025px;">19</span>
<div class="tb" style="left:36.3px;top:223.9px;width:18.6px;height:18.6px;"></div>
<span class="t" style="left:39.4px;top:226.2px;font-size:11px;line-height:14px;letter-spacing:-0.575px;">31</span>
<div class="tb" style="left:55.9px;top:223.9px;width:47.0px;height:18.6px;"></div>
<span class="t" style="left:59.4px;top:226.2px;font-size:11px;line-height:14px;letter-spacing:-0.093px;">4.6238</span>
<div class="tb" style="left:120.0px;top:223.9px;width:18.6px;height:18.6px;"></div>
<span class="t" style="left:124.0px;top:226.2px;font-size:11px;line-height:14px;letter-spacing:-0.125px;">19</span>
<div class="tb" style="left:140.0px;top:223.9px;width:18.7px;height:18.6px;"></div>
<span class="t" style="left:143.6px;top:226.2px;font-size:11px;line-height:14px;letter-spacing:-0.625px;">31</span>
<div class="tb" style="left:160.0px;top:223.9px;width:46.9px;height:18.6px;"></div>
<span class="t" style="left:163.5px;top:226.2px;font-size:11px;line-height:14px;letter-spacing:-0.109px;">4.6735</span>
<div class="btn" style="left:216.0px;top:219.3px;width:16.5px;height:20.7px;"><svg width="8.8" height="9.680000000000001" viewBox="0 0 8.8 9.680000000000001" style="position:absolute;left:50%;top:50%;margin-left:-4.4px;margin-top:-4.840000000000001px"><polygon points="0,9.680000000000001 4.4,0 8.8,9.680000000000001" fill="#000"/></svg></div>
<div class="btn" style="left:216.0px;top:244.0px;width:16.5px;height:20.8px;"><svg width="8.8" height="9.680000000000001" viewBox="0 0 8.8 9.680000000000001" style="position:absolute;left:50%;top:50%;margin-left:-4.4px;margin-top:-4.840000000000001px"><polygon points="0,0 8.8,0 4.4,9.680000000000001" fill="#000"/></svg></div>
<div class="btn" style="left:8.3px;top:248.7px;width:200.7px;height:15.1px;"></div>
<span class="t" style="left:18.0px;top:249.0px;font-size:11px;line-height:14px;letter-spacing:-0.198px;">Apply the edit time and Re-open graph</span>
<div class="btn" style="left:8.3px;top:268.0px;width:200.7px;height:15.0px;"></div>
<span class="t" style="left:14.5px;top:268.2px;font-size:11px;line-height:14px;letter-spacing:-0.278px;">Re-read  Time Stamp from current frame</span>
<span class="t" style="left:212.9px;top:267.0px;font-size:11px;line-height:14px;letter-spacing:-0.537px;">Time</span>
<div class="btn" style="left:256.6px;top:164.5px;width:200.0px;height:18.5px;"></div>
<span class="t" style="left:267.0px;top:167.0px;font-size:12px;line-height:15px;font-weight:bold;letter-spacing:-0.112px;">Add doublestar result to Report</span>
<div style="left:247.7px;top:185.0px;width:208.9px;height:2.0px;background:#6aaee8;border-bottom:1px solid #cfe4f8;box-sizing:border-box;"></div>
<span class="t" style="left:248.3px;top:190.0px;font-size:11px;line-height:14px;letter-spacing:-0.155px;">Integrated</span>
<span class="t" style="left:248.3px;top:202.0px;font-size:11px;line-height:14px;letter-spacing:-0.421px;">frames</span>
<div class="tb" style="left:304.6px;top:197.6px;width:31.0px;height:18.6px;"></div>
<span class="t" style="left:307.7px;top:200.0px;font-size:11px;line-height:14px;">0</span>
<div class="btn" style="left:336.0px;top:197.6px;width:16.6px;height:11.4px;"><svg width="6" height="3" viewBox="0 0 6 3" style="position:absolute;left:50%;top:50%;margin-left:-3.0px;margin-top:-1.5px"><polygon points="0,3 3,0 6,3" fill="#000"/></svg></div>
<div class="btn" style="left:336.0px;top:210.0px;width:16.6px;height:11.4px;"><svg width="6" height="3" viewBox="0 0 6 3" style="position:absolute;left:50%;top:50%;margin-left:-3.0px;margin-top:-1.5px"><polygon points="0,0 6,0 3,3" fill="#000"/></svg></div>
<span class="t" style="left:360.4px;top:197.2px;font-size:11px;line-height:14px;letter-spacing:-0.269px;">Digits</span>
<div class="tb" style="left:392.5px;top:197.6px;width:23.4px;height:18.6px;"></div>
<span class="t" style="left:395.6px;top:200.0px;font-size:11px;line-height:14px;">3</span>
<div class="btn" style="left:416.3px;top:197.6px;width:16.1px;height:11.4px;"><svg width="6" height="3" viewBox="0 0 6 3" style="position:absolute;left:50%;top:50%;margin-left:-3.0px;margin-top:-1.5px"><polygon points="0,3 3,0 6,3" fill="#000"/></svg></div>
<div class="btn" style="left:416.3px;top:210.0px;width:16.1px;height:11.4px;"><svg width="6" height="3" viewBox="0 0 6 3" style="position:absolute;left:50%;top:50%;margin-left:-3.0px;margin-top:-1.5px"><polygon points="0,0 6,0 3,3" fill="#000"/></svg></div>
<div class="chk" style="left:248.3px;top:228.6px;width:11.5px;height:11.5px;"></div>
<span class="t" style="left:266.3px;top:226.8px;font-size:11px;line-height:14px;letter-spacing:-0.277px;">Consider step hight for time estimation</span>
<div class="gb" style="left:247.3px;top:250.8px;width:216.1px;height:44.6px;"></div>
<span class="t" style="left:255.6px;top:244.8px;font-size:11px;line-height:14px;font-weight:bold;letter-spacing:0.381px;background:#f0f0f0;">Calculation for event time</span>
<div class="rad" style="left:258.0px;top:263.5px;width:11.0px;height:11.0px;"></div>
<span class="t" style="left:275.2px;top:262.0px;font-size:11px;line-height:14px;letter-spacing:-0.567px;">OFF</span>
<div class="rad" style="left:304.2px;top:263.5px;width:11.0px;height:11.0px;"></div>
<span class="t" style="left:320.7px;top:262.0px;font-size:11px;line-height:14px;letter-spacing:0.169px;">WAT120N</span>
<div class="rad" style="left:384.2px;top:263.5px;width:11.0px;height:11.0px;"></div>
<span class="t" style="left:400.8px;top:262.0px;font-size:11px;line-height:14px;letter-spacing:-0.092px;">WAT910H&gt;</span>
<div class="rad" style="left:303.6px;top:279.5px;width:11.0px;height:11.0px;"><i></i></div>
<span class="t" style="left:320.7px;top:278.0px;font-size:11px;line-height:14px;font-weight:bold;letter-spacing:0.711px;">CMOS or WAT100N</span>
<div class="tb" style="left:1.0px;top:302.8px;width:462.6px;height:46.5px;"></div>
<div class="btn" style="left:400.4px;top:335.0px;width:64.3px;height:23.5px;"></div>
<span class="t" style="left:407.8px;top:339.0px;font-size:11px;line-height:14px;letter-spacing:-0.492px;">-&gt; Clip brd.</span>
<div class="tb" style="left:3.0px;top:365.0px;width:460.6px;height:240.0px;"></div>
<div style="left:447.0px;top:367.0px;width:15.6px;height:237.0px;background:#f0f0f0;"></div>
<svg width="10" height="6" style="position:absolute;left:450.5px;top:372.5px"><polygon points="0,6 5,0 10,6" fill="#a8a8a8"/></svg>
<svg width="10" height="6" style="position:absolute;left:450.5px;top:593px"><polygon points="0,0 10,0 5,6" fill="#a8a8a8"/></svg>
<span class="t" style="left:9.0px;top:367.5px;font-size:14px;line-height:15px;font-family:'Liberation Mono', monospace;letter-spacing:-0.401px;">2025-3-21 / (329)Svea / Kepler2 329 V=12.71  R=11.53 m:</span>
<span class="t" style="left:9.0px;top:397.5px;font-size:14px;line-height:15px;font-family:'Liberation Mono', monospace;letter-spacing:-0.401px;">Event Time : 19h31m04.709s  +/- 0.030s  S/N=5.19</span>
<span class="t" style="left:9.0px;top:412.5px;font-size:14px;line-height:15px;font-family:'Liberation Mono', monospace;letter-spacing:-0.402px;">Mag Drop (predicted):  1.7   Mag. [for fitting]</span>
<span class="t" style="left:9.0px;top:427.5px;font-size:14px;line-height:15px;font-family:'Liberation Mono', monospace;letter-spacing:-0.402px;">Mag Drop (measured ):  0.60  Mag.</span>
<span class="t" style="left:9.0px;top:457.5px;font-size:14px;line-height:15px;font-family:'Liberation Mono', monospace;letter-spacing:-0.402px;">-Statistical analysis of Light Intensity-</span>
<span class="t" style="left:9.0px;top:472.5px;font-size:14px;line-height:15px;font-family:'Liberation Mono', monospace;letter-spacing:-0.402px;">Light intensity    Average   Stdv      n</span>
<span class="t" style="left:9.0px;top:487.5px;font-size:14px;line-height:15px;font-family:'Liberation Mono', monospace;letter-spacing:-0.402px;">  Combined  :      5800.8    476.0     19</span>
<span class="t" style="left:9.0px;top:502.5px;font-size:14px;line-height:15px;font-family:'Liberation Mono', monospace;letter-spacing:-0.402px;">  Background:      3332.4    338.8     27</span>
<span class="t" style="left:9.0px;top:517.5px;font-size:14px;line-height:15px;font-family:'Liberation Mono', monospace;letter-spacing:-0.402px;">Noise Level (N/S)  Upper    Lower   (S/N)</span>
<span class="t" style="left:9.0px;top:532.5px;font-size:14px;line-height:15px;font-family:'Liberation Mono', monospace;letter-spacing:-0.402px;">  First event:     0.2965   0.0000</span>
<span class="t" style="left:9.0px;top:547.5px;font-size:14px;line-height:15px;font-family:'Liberation Mono', monospace;letter-spacing:-0.402px;">  Total event:     0.1928   0.1373   5.19</span>
<span class="t" style="left:9.0px;top:562.5px;font-size:14px;line-height:15px;font-family:'Liberation Mono', monospace;letter-spacing:-0.402px;">0.99106</span>
<div style="left:3.0px;top:605.0px;width:2.0px;height:16.0px;border-left:1px solid #808080;"></div>
<div style="left:21.0px;top:612.0px;width:393.6px;height:2.0px;background:#808080;"></div>
<div class="gb" style="left:2.5px;top:636.2px;width:174.8px;height:65.1px;"></div>
<span class="t" style="left:10.8px;top:630.0px;font-size:11px;line-height:14px;letter-spacing:-0.129px;background:#f0f0f0;">Text out to Graph</span>
<div class="rad" style="left:11.2px;top:646.5px;width:11.0px;height:11.0px;"></div>
<span class="t" style="left:28.4px;top:645.0px;font-size:11px;line-height:14px;letter-spacing:-0.933px;">OFF</span>
<div class="rad" style="left:11.2px;top:664.8px;width:11.0px;height:11.0px;"><i></i></div>
<span class="t" style="left:28.4px;top:663.3px;font-size:11px;line-height:14px;letter-spacing:-0.186px;">Text with transparency BKG</span>
<div class="rad" style="left:11.2px;top:682.8px;width:11.0px;height:11.0px;"></div>
<span class="t" style="left:28.4px;top:681.3px;font-size:11px;line-height:14px;letter-spacing:-0.056px;">Text with opaque background</span>
<div class="gb" style="left:184.0px;top:636.2px;width:88.0px;height:65.1px;"></div>
<span class="t" style="left:192.4px;top:630.0px;font-size:11px;line-height:14px;letter-spacing:-0.158px;background:#f0f0f0;">Mode</span>
<div class="rad" style="left:193.2px;top:646.5px;width:11.0px;height:11.0px;"><i></i></div>
<span class="t" style="left:210.4px;top:645.0px;font-size:11px;line-height:14px;letter-spacing:-0.362px;">Time</span>
<div class="rad" style="left:193.2px;top:664.8px;width:11.0px;height:11.0px;"></div>
<span class="t" style="left:210.4px;top:663.3px;font-size:11px;line-height:14px;letter-spacing:-0.140px;">Info. Right</span>
<div class="rad" style="left:193.2px;top:682.8px;width:11.0px;height:11.0px;"></div>
<span class="t" style="left:210.4px;top:681.3px;font-size:11px;line-height:14px;letter-spacing:-0.091px;">Info. Left</span>
<div class="sbtrack" style="left:279.4px;top:632.4px;width:161.3px;height:17.0px;"></div>
<div class="btn" style="left:279.4px;top:632.4px;width:16.9px;height:17.0px;"><svg width="4" height="8" viewBox="0 0 4 8" style="position:absolute;left:50%;top:50%;margin-left:-2.0px;margin-top:-4.0px"><polygon points="4,0 4,8 0,4" fill="#000"/></svg></div>
<div class="btn" style="left:361.5px;top:632.4px;width:16.5px;height:17.0px;"></div>
<div class="btn" style="left:424.0px;top:632.4px;width:16.7px;height:17.0px;"><svg width="4" height="8" viewBox="0 0 4 8" style="position:absolute;left:50%;top:50%;margin-left:-2.0px;margin-top:-4.0px"><polygon points="0,0 0,8 4,4" fill="#000"/></svg></div>
<div class="gb" style="left:280.4px;top:660.4px;width:55.2px;height:40.9px;"></div>
<span class="t" style="left:288.5px;top:654.0px;font-size:11px;line-height:14px;letter-spacing:-0.349px;background:#f0f0f0;">Font size</span>
<div class="btn" style="left:288.5px;top:671.3px;width:15.7px;height:10.2px;"><svg width="6" height="3" viewBox="0 0 6 3" style="position:absolute;left:50%;top:50%;margin-left:-3.0px;margin-top:-1.5px"><polygon points="0,3 3,0 6,3" fill="#000"/></svg></div>
<div class="btn" style="left:288.5px;top:683.0px;width:15.7px;height:11.0px;"><svg width="6" height="3" viewBox="0 0 6 3" style="position:absolute;left:50%;top:50%;margin-left:-3.0px;margin-top:-1.5px"><polygon points="0,0 6,0 3,3" fill="#000"/></svg></div>
<div class="tb" style="left:304.6px;top:670.7px;width:23.2px;height:19.3px;"></div>
<span class="t" style="left:307.7px;top:673.5px;font-size:11px;line-height:14px;letter-spacing:-0.475px;">10</span>
<div class="tb" style="left:347.0px;top:654.8px;width:96.2px;height:18.6px;"></div>
<span class="t" style="left:350.0px;top:657.0px;font-size:11px;line-height:14px;letter-spacing:-0.201px;">Edit16</span>
<div class="tb" style="left:346.0px;top:678.3px;width:96.0px;height:18.7px;"></div>
<span class="t" style="left:349.5px;top:680.7px;font-size:11px;line-height:14px;letter-spacing:-0.201px;">Edit25</span>
<div class="sbtrack" style="left:450.4px;top:614.9px;width:16.1px;height:142.7px;"></div>
<div class="btn" style="left:450.4px;top:614.9px;width:16.1px;height:14.4px;"><svg width="8" height="4" viewBox="0 0 8 4" style="position:absolute;left:50%;top:50%;margin-left:-4.0px;margin-top:-2.0px"><polygon points="0,4 4,0 8,4" fill="#000"/></svg></div>
<div class="btn" style="left:450.4px;top:712.0px;width:16.1px;height:15.0px;"></div>
<div class="btn" style="left:450.4px;top:743.0px;width:16.1px;height:14.6px;"><svg width="8" height="4" viewBox="0 0 8 4" style="position:absolute;left:50%;top:50%;margin-left:-4.0px;margin-top:-2.0px"><polygon points="0,0 8,0 4,4" fill="#000"/></svg></div>
<div class="tb" style="left:8.3px;top:710.5px;width:432.7px;height:70.5px;"></div>
<div style="left:10.3px;top:712.5px;width:428.7px;height:16.1px;background:#0078d7;"></div>
<span class="t" style="left:13.0px;top:711.7px;font-size:14px;line-height:18px;color:#fff;letter-spacing:0.196px;">1  19 31 04.709 +/- 0.030s,  S/N= 5.19 D</span>
<span class="t" style="left:286.4px;top:711.7px;font-size:14px;line-height:18px;color:#fff;letter-spacing:0.103px;">Main change</span>
<div class="btn" style="left:32.2px;top:790.5px;width:192.5px;height:23.5px;"></div>
<span class="t" style="left:46.3px;top:795.0px;font-size:11px;line-height:14px;letter-spacing:-0.233px;">Miss Disappearance  (approx. time)</span>
<div class="btn" style="left:232.5px;top:790.5px;width:184.2px;height:23.5px;"></div>
<span class="t" style="left:240.4px;top:795.0px;font-size:11px;line-height:14px;letter-spacing:-0.158px;">Miss  Reapppearance [approx. tine]</span>
<div class="tb" style="left:8.4px;top:830.6px;width:111.0px;height:19.0px;"></div>
<span class="t" style="left:11.5px;top:833.3px;font-size:11px;line-height:14px;letter-spacing:-0.126px;">Main light change</span>
<div class="btn" style="left:102.4px;top:832.6px;width:15.2px;height:15.0px;"><svg width="7.0" height="3.5" viewBox="0 0 7.0 3.5" style="position:absolute;left:50%;top:50%;margin-left:-3.5px;margin-top:-1.75px"><polygon points="0,0 7.0,0 3.5,3.5" fill="#000"/></svg></div>
<div class="btn" style="left:128.7px;top:822.5px;width:55.8px;height:31.5px;"></div>
<span class="t" style="left:135.5px;top:828.3px;font-size:15px;line-height:19px;letter-spacing:-0.360px;">Delete</span>
<div class="btn" style="left:190.8px;top:822.5px;width:47.5px;height:31.5px;"></div>
<span class="t" style="left:202.0px;top:829.8px;font-size:13px;line-height:16px;letter-spacing:0.139px;">Sort</span>
<div class="btn" style="left:250.3px;top:822.0px;width:112.5px;height:32.4px;border:1px solid #000;box-shadow:inset 1px 1px #fff,inset -1px -1px #696969,inset -2px -2px #a0a0a0;"></div>
<div style="left:254.5px;top:826.5px;width:104.5px;height:24.0px;border:1px dotted #000;box-sizing:border-box;"></div>
<span class="t" style="left:260.0px;top:828.3px;font-size:15px;line-height:19px;font-weight:bold;letter-spacing:-0.123px;">Add to report</span>
<div class="btn" style="left:376.4px;top:822.5px;width:88.3px;height:31.5px;"></div>
<span class="t" style="left:381.0px;top:830.3px;font-size:12px;line-height:15px;font-weight:bold;letter-spacing:-0.312px;">Apply &amp; Close</span></div>
</body></html>
